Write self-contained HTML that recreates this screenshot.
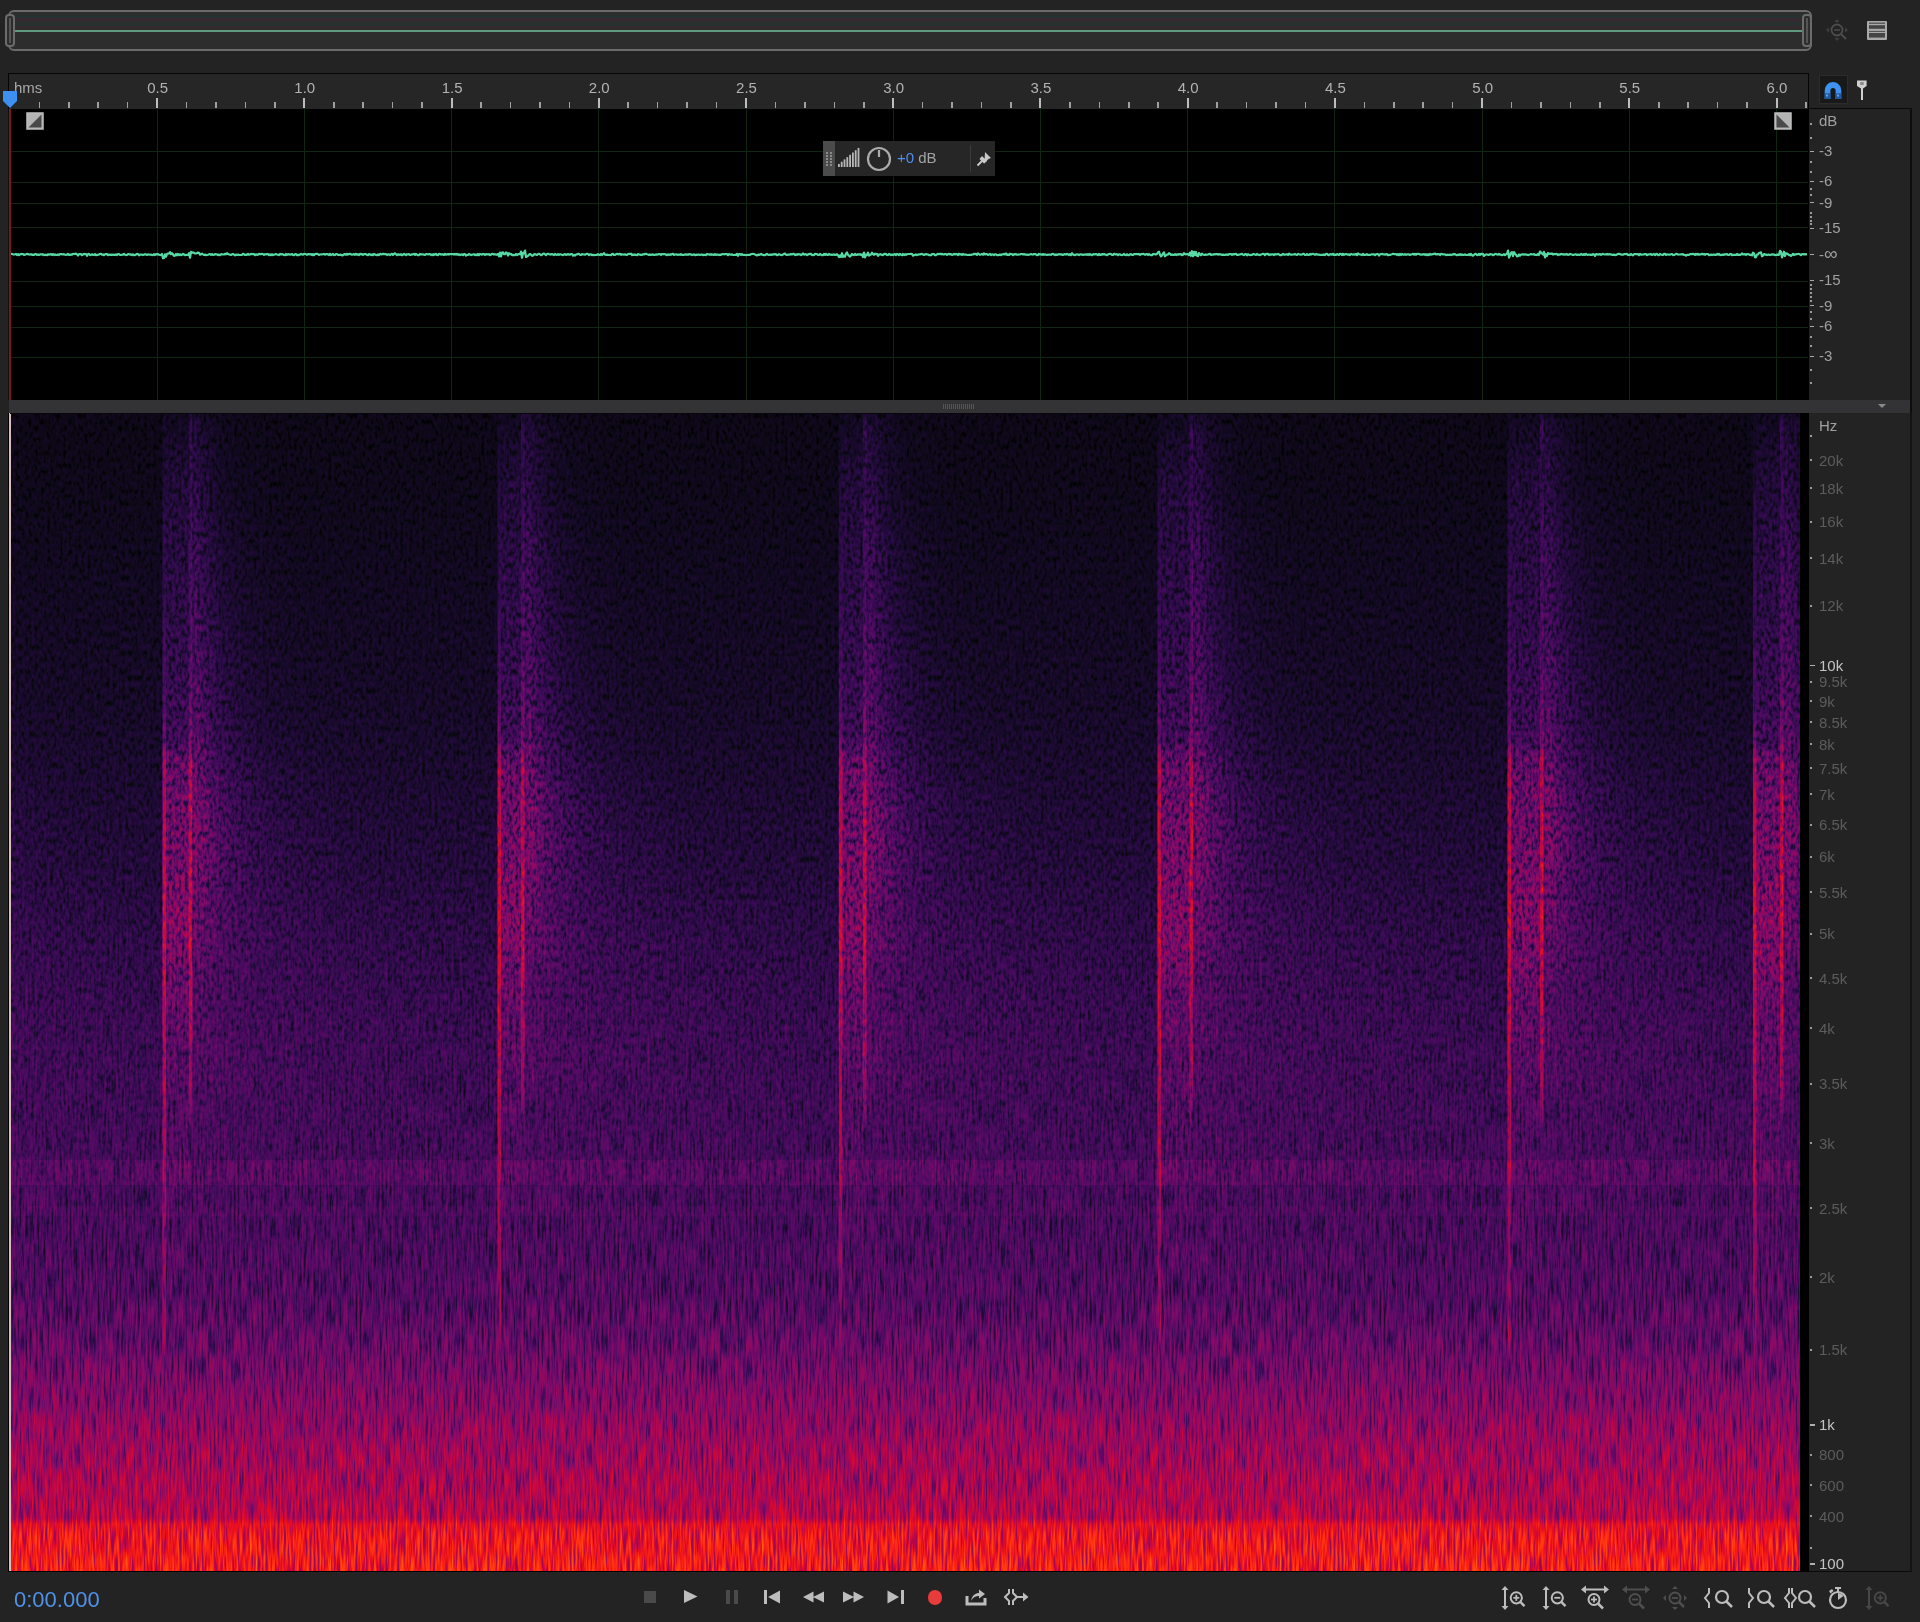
<!DOCTYPE html><html><head><meta charset="utf-8"><style>
*{margin:0;padding:0;box-sizing:border-box}
html,body{width:1920px;height:1622px;overflow:hidden;background:#232323;font-family:"Liberation Sans",sans-serif;-webkit-font-smoothing:antialiased}
.txt{will-change:transform}
.a{position:absolute}
.lbl{position:absolute;color:#b2b2b2;font-size:15px;line-height:15px;white-space:nowrap}
.hz{position:absolute;color:#5c5c5c;font-size:15px;line-height:15px;white-space:nowrap;left:1819px}
.db{position:absolute;color:#a0a0a0;font-size:15px;line-height:15px;white-space:nowrap;left:1819px}
</style></head><body><div class="a" style="left:0;top:0;width:1920px;height:1622px;will-change:transform"><div class="a" style="left:8px;top:10px;width:1804px;height:41px;border:2px solid #6b6b6b;border-radius:6px;background:#2d2d2d;overflow:hidden"><div class="a" style="left:0;top:3px;width:100%;height:3px;background:#263131"></div><div class="a" style="left:0;top:6px;width:100%;height:3px;background:#362a30"></div><div class="a" style="left:0;top:10px;width:100%;height:4px;background:#283030"></div><div class="a" style="left:0;top:14px;width:100%;height:3px;background:#352a2b"></div><div class="a" style="left:0;top:17.5px;width:100%;height:2px;background:#5f9a80"></div></div><div class="a" style="left:5px;top:14px;width:10px;height:33px;border:2px solid #6b6b6b;border-radius:4px;background:#2d2d2d"><div class="a" style="left:2px;top:2px;width:2px;height:25px;background:#555"></div></div><div class="a" style="left:1802px;top:14px;width:10px;height:33px;border:2px solid #6b6b6b;border-radius:4px;background:#2d2d2d"><div class="a" style="left:2px;top:2px;width:2px;height:25px;background:#555"></div></div><svg class="a" style="left:1824px;top:17px" width="28" height="28" viewBox="0 0 28 28"><circle cx="13" cy="13" r="5.5" fill="none" stroke="#4c4c4c" stroke-width="1.8"/><line x1="10" y1="13" x2="16" y2="13" stroke="#4c4c4c" stroke-width="1.5"/><line x1="17" y1="17" x2="22" y2="22" stroke="#4c4c4c" stroke-width="2"/><path d="M13 2 L15.5 5 L10.5 5 Z M13 24 L15.5 21 L10.5 21 Z M2 13 L5 10.5 L5 15.5 Z M24 13 L21 10.5 L21 15.5 Z" fill="#404040"/></svg><svg class="a" style="left:1866px;top:20px" width="22" height="21" viewBox="0 0 22 21"><rect x="1" y="1" width="20" height="19" rx="1" fill="#a9a9a9"/><rect x="3" y="2.6" width="16" height="1.2" fill="#4a4a4a"/><rect x="3" y="5.2" width="16" height="3.6" fill="#444"/><rect x="3" y="10.9" width="16" height="1.1" fill="#555"/><rect x="3" y="13" width="16" height="4.6" fill="#444"/></svg><div class="a" style="left:8px;top:73px;width:1801px;height:37px;background:#262626;border:1px solid #050505;border-bottom:1px solid #000"></div><div class="a" style="left:38.5px;top:102px;width:1.6px;height:6px;background:#a0a0a0"></div><div class="a" style="left:68.0px;top:102px;width:1.6px;height:6px;background:#a0a0a0"></div><div class="a" style="left:97.4px;top:102px;width:1.6px;height:6px;background:#a0a0a0"></div><div class="a" style="left:126.9px;top:102px;width:1.6px;height:6px;background:#a0a0a0"></div><div class="a" style="left:156.1px;top:98px;width:2px;height:10px;background:#bdbdbd"></div><div class="a" style="left:185.8px;top:102px;width:1.6px;height:6px;background:#a0a0a0"></div><div class="a" style="left:215.2px;top:102px;width:1.6px;height:6px;background:#a0a0a0"></div><div class="a" style="left:244.7px;top:102px;width:1.6px;height:6px;background:#a0a0a0"></div><div class="a" style="left:274.1px;top:102px;width:1.6px;height:6px;background:#a0a0a0"></div><div class="a" style="left:303.3px;top:98px;width:2px;height:10px;background:#bdbdbd"></div><div class="a" style="left:333.0px;top:102px;width:1.6px;height:6px;background:#a0a0a0"></div><div class="a" style="left:362.4px;top:102px;width:1.6px;height:6px;background:#a0a0a0"></div><div class="a" style="left:391.9px;top:102px;width:1.6px;height:6px;background:#a0a0a0"></div><div class="a" style="left:421.3px;top:102px;width:1.6px;height:6px;background:#a0a0a0"></div><div class="a" style="left:450.6px;top:98px;width:2px;height:10px;background:#bdbdbd"></div><div class="a" style="left:480.2px;top:102px;width:1.6px;height:6px;background:#a0a0a0"></div><div class="a" style="left:509.6px;top:102px;width:1.6px;height:6px;background:#a0a0a0"></div><div class="a" style="left:539.1px;top:102px;width:1.6px;height:6px;background:#a0a0a0"></div><div class="a" style="left:568.5px;top:102px;width:1.6px;height:6px;background:#a0a0a0"></div><div class="a" style="left:597.8px;top:98px;width:2px;height:10px;background:#bdbdbd"></div><div class="a" style="left:627.4px;top:102px;width:1.6px;height:6px;background:#a0a0a0"></div><div class="a" style="left:656.9px;top:102px;width:1.6px;height:6px;background:#a0a0a0"></div><div class="a" style="left:686.3px;top:102px;width:1.6px;height:6px;background:#a0a0a0"></div><div class="a" style="left:715.8px;top:102px;width:1.6px;height:6px;background:#a0a0a0"></div><div class="a" style="left:745.0px;top:98px;width:2px;height:10px;background:#bdbdbd"></div><div class="a" style="left:774.6px;top:102px;width:1.6px;height:6px;background:#a0a0a0"></div><div class="a" style="left:804.1px;top:102px;width:1.6px;height:6px;background:#a0a0a0"></div><div class="a" style="left:833.5px;top:102px;width:1.6px;height:6px;background:#a0a0a0"></div><div class="a" style="left:863.0px;top:102px;width:1.6px;height:6px;background:#a0a0a0"></div><div class="a" style="left:892.2px;top:98px;width:2px;height:10px;background:#bdbdbd"></div><div class="a" style="left:921.9px;top:102px;width:1.6px;height:6px;background:#a0a0a0"></div><div class="a" style="left:951.3px;top:102px;width:1.6px;height:6px;background:#a0a0a0"></div><div class="a" style="left:980.8px;top:102px;width:1.6px;height:6px;background:#a0a0a0"></div><div class="a" style="left:1010.2px;top:102px;width:1.6px;height:6px;background:#a0a0a0"></div><div class="a" style="left:1039.4px;top:98px;width:2px;height:10px;background:#bdbdbd"></div><div class="a" style="left:1069.1px;top:102px;width:1.6px;height:6px;background:#a0a0a0"></div><div class="a" style="left:1098.5px;top:102px;width:1.6px;height:6px;background:#a0a0a0"></div><div class="a" style="left:1128.0px;top:102px;width:1.6px;height:6px;background:#a0a0a0"></div><div class="a" style="left:1157.4px;top:102px;width:1.6px;height:6px;background:#a0a0a0"></div><div class="a" style="left:1186.7px;top:98px;width:2px;height:10px;background:#bdbdbd"></div><div class="a" style="left:1216.3px;top:102px;width:1.6px;height:6px;background:#a0a0a0"></div><div class="a" style="left:1245.7px;top:102px;width:1.6px;height:6px;background:#a0a0a0"></div><div class="a" style="left:1275.2px;top:102px;width:1.6px;height:6px;background:#a0a0a0"></div><div class="a" style="left:1304.6px;top:102px;width:1.6px;height:6px;background:#a0a0a0"></div><div class="a" style="left:1333.9px;top:98px;width:2px;height:10px;background:#bdbdbd"></div><div class="a" style="left:1363.5px;top:102px;width:1.6px;height:6px;background:#a0a0a0"></div><div class="a" style="left:1393.0px;top:102px;width:1.6px;height:6px;background:#a0a0a0"></div><div class="a" style="left:1422.4px;top:102px;width:1.6px;height:6px;background:#a0a0a0"></div><div class="a" style="left:1451.9px;top:102px;width:1.6px;height:6px;background:#a0a0a0"></div><div class="a" style="left:1481.1px;top:98px;width:2px;height:10px;background:#bdbdbd"></div><div class="a" style="left:1510.7px;top:102px;width:1.6px;height:6px;background:#a0a0a0"></div><div class="a" style="left:1540.2px;top:102px;width:1.6px;height:6px;background:#a0a0a0"></div><div class="a" style="left:1569.6px;top:102px;width:1.6px;height:6px;background:#a0a0a0"></div><div class="a" style="left:1599.1px;top:102px;width:1.6px;height:6px;background:#a0a0a0"></div><div class="a" style="left:1628.3px;top:98px;width:2px;height:10px;background:#bdbdbd"></div><div class="a" style="left:1658.0px;top:102px;width:1.6px;height:6px;background:#a0a0a0"></div><div class="a" style="left:1687.4px;top:102px;width:1.6px;height:6px;background:#a0a0a0"></div><div class="a" style="left:1716.9px;top:102px;width:1.6px;height:6px;background:#a0a0a0"></div><div class="a" style="left:1746.3px;top:102px;width:1.6px;height:6px;background:#a0a0a0"></div><div class="a" style="left:1775.5px;top:98px;width:2px;height:10px;background:#bdbdbd"></div><div class="a" style="left:1805.2px;top:102px;width:1.6px;height:6px;background:#a0a0a0"></div><div class="lbl" style="left:137.6px;top:80px;width:40px;text-align:center">0.5</div><div class="lbl" style="left:284.8px;top:80px;width:40px;text-align:center">1.0</div><div class="lbl" style="left:432.1px;top:80px;width:40px;text-align:center">1.5</div><div class="lbl" style="left:579.3px;top:80px;width:40px;text-align:center">2.0</div><div class="lbl" style="left:726.5px;top:80px;width:40px;text-align:center">2.5</div><div class="lbl" style="left:873.7px;top:80px;width:40px;text-align:center">3.0</div><div class="lbl" style="left:1020.9px;top:80px;width:40px;text-align:center">3.5</div><div class="lbl" style="left:1168.2px;top:80px;width:40px;text-align:center">4.0</div><div class="lbl" style="left:1315.4px;top:80px;width:40px;text-align:center">4.5</div><div class="lbl" style="left:1462.6px;top:80px;width:40px;text-align:center">5.0</div><div class="lbl" style="left:1609.8px;top:80px;width:40px;text-align:center">5.5</div><div class="lbl" style="left:1757.0px;top:80px;width:40px;text-align:center">6.0</div><div class="lbl" style="left:14px;top:80px;color:#a8a8a8">hms</div><svg class="a" style="left:2px;top:90px" width="16" height="19" viewBox="0 0 16 19"><path d="M1 1 H15 V11 L8 18 L1 11 Z" fill="#3d8ff0"/></svg><div class="a" style="left:1819px;top:75px;width:29px;height:29px;background:#191919;border:1px solid #2c2c2c"></div><svg class="a" style="left:1823px;top:80px" width="20" height="21" viewBox="0 0 20 21"><path d="M1.7 19 V10.3 A8.3 8.3 0 0 1 18.3 10.3 V19 H12.6 V10.5 A2.6 2.6 0 0 0 7.4 10.5 V19 Z" fill="#3d92f2"/><rect x="1.7" y="13.3" width="5.7" height="5.7" fill="#1f5aa0"/><rect x="12.6" y="13.3" width="5.7" height="5.7" fill="#1f5aa0"/><rect x="3" y="14.5" width="2" height="2" fill="#5aa6f5"/><rect x="14" y="14.5" width="2" height="2" fill="#5aa6f5"/></svg><svg class="a" style="left:1856px;top:79px" width="12" height="23" viewBox="0 0 12 23"><path d="M1 1.4 H10.6 V7 L7 9.6 V21 H5 V9.6 L1 7 Z" fill="#cfcfcf"/><rect x="4.2" y="3" width="3.5" height="3" fill="#8a8a8a"/></svg><div class="a" style="left:8px;top:109px;width:1801px;height:291px;background:#000;border-left:1px solid #111"></div><div class="a" style="left:11px;top:151px;width:1797px;height:1px;background:#112612"></div><div class="a" style="left:11px;top:182px;width:1797px;height:1px;background:#112612"></div><div class="a" style="left:11px;top:203px;width:1797px;height:1px;background:#112612"></div><div class="a" style="left:11px;top:227px;width:1797px;height:1px;background:#112612"></div><div class="a" style="left:11px;top:281px;width:1797px;height:1px;background:#112612"></div><div class="a" style="left:11px;top:306px;width:1797px;height:1px;background:#112612"></div><div class="a" style="left:11px;top:327px;width:1797px;height:1px;background:#112612"></div><div class="a" style="left:11px;top:357px;width:1797px;height:1px;background:#112612"></div><div class="a" style="left:157px;top:109px;width:1px;height:291px;background:#112612"></div><div class="a" style="left:304px;top:109px;width:1px;height:291px;background:#112612"></div><div class="a" style="left:451px;top:109px;width:1px;height:291px;background:#112612"></div><div class="a" style="left:598px;top:109px;width:1px;height:291px;background:#112612"></div><div class="a" style="left:746px;top:109px;width:1px;height:291px;background:#112612"></div><div class="a" style="left:893px;top:109px;width:1px;height:291px;background:#112612"></div><div class="a" style="left:1040px;top:109px;width:1px;height:291px;background:#112612"></div><div class="a" style="left:1187px;top:109px;width:1px;height:291px;background:#112612"></div><div class="a" style="left:1334px;top:109px;width:1px;height:291px;background:#112612"></div><div class="a" style="left:1482px;top:109px;width:1px;height:291px;background:#112612"></div><div class="a" style="left:1629px;top:109px;width:1px;height:291px;background:#112612"></div><div class="a" style="left:1776px;top:109px;width:1px;height:291px;background:#112612"></div><div class="a" style="left:9px;top:109px;width:2px;height:291px;background:#7a1822"></div><svg class="a" style="left:0;top:0" width="1810" height="400"><polyline points="11,254.0 12,253.9 13,254.3 14,254.5 15,254.3 16,253.9 17,255.0 18,254.1 19,255.1 20,254.4 21,253.9 22,254.2 23,254.0 24,254.9 25,254.6 26,254.3 27,253.9 28,254.1 29,254.4 30,254.6 31,254.2 32,254.8 33,254.6 34,255.0 35,254.2 36,254.0 37,254.9 38,254.5 39,255.0 40,254.6 41,254.2 42,254.6 43,254.4 44,255.1 45,254.7 46,254.8 47,255.2 48,254.2 49,254.7 50,254.4 51,254.0 52,254.9 53,254.1 54,255.0 55,254.4 56,255.0 57,255.0 58,254.4 59,255.0 60,254.0 61,254.1 62,254.5 63,254.2 64,254.3 65,254.6 66,254.8 67,254.7 68,253.9 69,254.9 70,254.9 71,254.4 72,254.7 73,253.9 74,254.0 75,253.9 76,253.5 77,254.3 78,255.5 79,254.0 80,254.3 81,254.0 82,255.2 83,254.5 84,253.9 85,254.2 86,254.0 87,255.8 88,254.0 89,253.8 90,255.2 91,254.8 92,254.3 93,254.9 94,254.9 95,254.1 96,255.2 97,254.9 98,254.8 99,254.5 100,253.8 101,253.9 102,254.8 103,254.4 104,255.2 105,254.3 106,254.1 107,254.1 108,255.1 109,254.5 110,254.9 111,254.7 112,254.9 113,254.5 114,254.9 115,254.9 116,254.4 117,255.1 118,254.0 119,254.0 120,254.9 121,255.0 122,254.7 123,254.6 124,253.8 125,254.7 126,255.1 127,255.0 128,254.1 129,254.2 130,254.6 131,254.4 132,255.1 133,254.4 134,255.1 135,255.1 136,254.5 137,253.8 138,254.1 139,255.3 140,254.5 141,254.6 142,254.5 143,254.9 144,254.6 145,254.2 146,254.5 147,254.9 148,254.4 149,254.5 150,254.8 151,254.5 152,255.1 153,255.0 154,254.2 155,255.1 156,254.0 157,254.4 158,254.1 159,254.7 160,255.1 161,254.8 162,254.0 163,258.2 164,257.9 165,254.4 166,256.7 167,254.1 168,253.6 169,253.5 170,252.2 171,254.2 172,253.2 173,254.5 174,255.9 175,255.7 176,254.0 177,255.3 178,254.0 179,255.1 180,254.2 181,255.1 182,254.8 183,253.9 184,254.4 185,255.1 186,254.9 187,255.0 188,255.0 189,253.2 190,257.7 191,251.9 192,252.8 193,252.4 194,252.8 195,253.5 196,253.5 197,253.1 198,252.6 199,252.8 200,254.7 201,254.4 202,253.7 203,254.4 204,255.0 205,254.5 206,255.2 207,255.0 208,254.7 209,254.3 210,254.0 211,254.8 212,254.0 213,255.0 214,254.7 215,254.1 216,254.4 217,254.4 218,255.1 219,254.6 220,255.2 221,254.3 222,254.2 223,254.5 224,254.5 225,253.8 226,254.4 227,253.2 228,254.1 229,254.5 230,254.7 231,255.0 232,254.3 233,254.0 234,254.7 235,255.4 236,254.7 237,254.9 238,254.5 239,255.0 240,255.0 241,255.0 242,254.8 243,253.8 244,254.3 245,255.0 246,254.7 247,254.8 248,253.8 249,254.8 250,254.5 251,253.9 252,254.2 253,254.2 254,254.1 255,255.2 256,254.3 257,254.8 258,254.7 259,253.9 260,254.2 261,254.2 262,253.8 263,254.2 264,254.8 265,254.2 266,254.5 267,254.0 268,254.1 269,255.1 270,254.4 271,255.2 272,254.2 273,255.1 274,254.6 275,254.5 276,254.0 277,254.5 278,254.8 279,255.1 280,253.8 281,254.5 282,254.2 283,254.3 284,255.0 285,255.2 286,254.0 287,254.8 288,254.2 289,254.4 290,254.6 291,254.4 292,253.9 293,255.0 294,255.1 295,254.2 296,254.1 297,255.1 298,254.9 299,255.1 300,254.6 301,253.9 302,254.4 303,254.7 304,253.9 305,254.0 306,254.3 307,254.8 308,254.2 309,254.2 310,254.4 311,254.0 312,255.1 313,254.1 314,255.2 315,254.0 316,253.9 317,253.9 318,254.2 319,255.0 320,254.4 321,254.5 322,254.3 323,254.2 324,254.0 325,254.7 326,254.1 327,254.1 328,254.4 329,255.0 330,253.8 331,255.1 332,254.5 333,253.8 334,255.1 335,255.0 336,254.1 337,254.0 338,254.8 339,254.8 340,254.9 341,254.6 342,255.3 343,255.1 344,254.2 345,254.2 346,254.8 347,253.9 348,254.6 349,254.1 350,253.8 351,254.4 352,254.7 353,254.5 354,254.1 355,254.8 356,253.8 357,254.7 358,254.2 359,255.1 360,253.8 361,254.4 362,254.1 363,254.8 364,254.1 365,254.2 366,254.1 367,254.9 368,255.1 369,254.1 370,254.4 371,255.1 372,254.4 373,255.2 374,253.9 375,254.4 376,255.0 377,255.2 378,254.3 379,255.1 380,253.8 381,254.3 382,254.3 383,253.8 384,254.3 385,254.0 386,254.1 387,255.0 388,254.4 389,254.4 390,255.1 391,254.3 392,253.8 393,254.9 394,253.9 395,253.3 396,254.2 397,255.1 398,254.2 399,254.7 400,254.8 401,254.2 402,255.2 403,254.7 404,253.8 405,254.5 406,255.1 407,254.2 408,254.5 409,254.1 410,254.8 411,254.9 412,254.3 413,254.3 414,253.9 415,254.9 416,253.9 417,254.6 418,255.2 419,255.2 420,253.9 421,254.5 422,254.4 423,254.4 424,254.7 425,255.0 426,254.0 427,254.2 428,254.3 429,254.1 430,254.1 431,255.0 432,254.3 433,255.2 434,254.1 435,254.7 436,253.9 437,254.9 438,255.1 439,253.9 440,254.1 441,254.6 442,254.3 443,254.4 444,254.9 445,253.9 446,254.7 447,254.3 448,254.1 449,254.6 450,254.1 451,254.0 452,254.1 453,254.1 454,254.6 455,253.9 456,254.6 457,253.9 458,254.8 459,254.2 460,255.1 461,254.6 462,254.4 463,255.2 464,254.1 465,254.1 466,255.6 467,254.9 468,255.0 469,254.0 470,254.6 471,255.1 472,254.7 473,254.5 474,254.2 475,255.1 476,254.5 477,255.2 478,254.0 479,255.2 480,253.9 481,254.3 482,254.7 483,254.0 484,254.1 485,255.0 486,254.1 487,254.4 488,254.3 489,254.1 490,255.1 491,254.7 492,253.9 493,254.0 494,254.6 495,254.2 496,254.6 497,254.7 498,254.0 499,256.3 500,252.6 501,256.4 502,252.5 503,252.3 504,254.1 505,254.2 506,252.5 507,252.9 508,255.5 509,253.2 510,254.2 511,253.8 512,255.2 513,254.9 514,255.2 515,255.1 516,254.0 517,255.1 518,254.3 519,254.0 520,254.2 521,251.6 522,257.7 523,252.8 524,253.3 525,250.6 526,257.0 527,256.6 528,255.9 529,254.6 530,254.0 531,254.7 532,255.6 533,255.7 534,254.3 535,254.2 536,254.6 537,254.9 538,254.0 539,253.9 540,254.2 541,255.2 542,254.7 543,253.8 544,253.5 545,254.4 546,255.1 547,254.1 548,253.8 549,254.1 550,254.3 551,254.6 552,254.1 553,254.5 554,255.1 555,254.0 556,254.7 557,254.9 558,254.2 559,254.9 560,254.3 561,254.4 562,254.8 563,255.1 564,254.6 565,254.1 566,254.9 567,254.6 568,254.0 569,254.7 570,254.7 571,254.0 572,254.2 573,255.6 574,254.8 575,255.5 576,254.5 577,254.4 578,253.9 579,253.9 580,254.8 581,255.0 582,254.2 583,254.4 584,254.5 585,254.7 586,254.1 587,253.8 588,254.1 589,255.1 590,254.3 591,254.3 592,255.1 593,254.8 594,255.2 595,255.0 596,255.0 597,254.8 598,254.2 599,254.7 600,255.1 601,253.8 602,255.1 603,254.0 604,253.2 605,254.7 606,254.8 607,254.6 608,254.9 609,255.0 610,255.0 611,255.1 612,254.1 613,253.8 614,254.9 615,255.0 616,254.2 617,253.9 618,254.1 619,254.4 620,253.8 621,254.8 622,254.2 623,254.5 624,254.7 625,254.3 626,254.9 627,254.8 628,254.1 629,253.9 630,254.0 631,253.7 632,255.2 633,254.5 634,254.9 635,254.5 636,255.0 637,255.1 638,254.1 639,254.5 640,254.7 641,254.9 642,254.9 643,254.3 644,254.4 645,253.9 646,253.8 647,254.2 648,254.5 649,255.0 650,254.4 651,254.9 652,254.7 653,254.3 654,255.0 655,254.8 656,254.4 657,254.6 658,254.4 659,254.1 660,254.2 661,255.0 662,254.0 663,254.3 664,254.0 665,254.1 666,254.8 667,255.1 668,254.3 669,254.9 670,254.4 671,254.7 672,254.1 673,253.8 674,254.9 675,254.5 676,254.4 677,254.6 678,254.8 679,254.4 680,254.8 681,254.1 682,255.0 683,254.8 684,254.8 685,254.4 686,254.7 687,254.4 688,254.8 689,254.2 690,254.4 691,254.4 692,255.1 693,254.7 694,254.3 695,255.2 696,254.6 697,254.9 698,254.5 699,254.6 700,254.8 701,254.7 702,254.5 703,255.1 704,254.8 705,254.9 706,255.2 707,253.9 708,254.4 709,254.3 710,254.8 711,254.2 712,254.8 713,254.5 714,254.9 715,254.1 716,254.9 717,254.7 718,254.6 719,255.1 720,254.7 721,254.9 722,254.2 723,254.0 724,254.3 725,254.2 726,254.2 727,254.1 728,255.1 729,254.1 730,254.5 731,254.7 732,254.3 733,255.0 734,255.0 735,254.9 736,255.0 737,253.8 738,255.8 739,254.2 740,254.0 741,254.9 742,254.0 743,254.9 744,255.0 745,254.9 746,255.1 747,255.0 748,254.8 749,254.8 750,255.0 751,254.2 752,254.0 753,253.9 754,254.0 755,254.5 756,255.0 757,255.5 758,254.6 759,255.0 760,254.4 761,253.9 762,254.7 763,254.8 764,255.1 765,255.2 766,254.5 767,253.8 768,254.7 769,255.0 770,254.5 771,254.9 772,254.4 773,254.6 774,254.2 775,254.4 776,254.2 777,255.2 778,254.9 779,254.2 780,254.6 781,254.9 782,255.1 783,254.6 784,253.9 785,253.6 786,254.7 787,254.9 788,254.7 789,254.7 790,254.6 791,254.1 792,254.4 793,253.9 794,253.9 795,255.1 796,254.3 797,254.9 798,254.2 799,254.4 800,254.4 801,255.1 802,254.6 803,253.4 804,254.6 805,254.4 806,254.2 807,255.1 808,254.5 809,253.9 810,254.1 811,253.8 812,255.0 813,255.2 814,255.0 815,253.8 816,254.1 817,254.1 818,254.9 819,255.0 820,253.9 821,254.8 822,255.1 823,255.2 824,253.8 825,254.9 826,253.9 827,254.8 828,255.0 829,253.9 830,254.6 831,254.7 832,254.9 833,254.7 834,254.4 835,254.9 836,254.9 837,254.2 838,255.2 839,257.1 840,255.3 841,256.8 842,253.2 843,256.9 844,255.6 845,256.6 846,253.5 847,252.4 848,254.8 849,255.8 850,256.5 851,255.4 852,254.0 853,254.9 854,255.1 855,253.9 856,254.9 857,254.9 858,254.1 859,254.7 860,254.1 861,254.9 862,254.4 863,257.0 864,252.5 865,257.3 866,254.6 867,255.1 868,252.7 869,255.6 870,254.8 871,254.6 872,252.7 873,254.1 874,254.9 875,253.6 876,254.2 877,253.8 878,255.9 879,254.5 880,254.2 881,254.4 882,254.9 883,255.1 884,253.9 885,254.1 886,253.9 887,255.0 888,255.1 889,253.9 890,254.4 891,255.1 892,254.6 893,255.1 894,254.4 895,254.0 896,255.2 897,253.9 898,254.3 899,255.1 900,253.9 901,254.8 902,255.2 903,254.0 904,255.1 905,254.2 906,254.9 907,254.3 908,254.0 909,254.0 910,254.0 911,253.8 912,254.1 913,255.7 914,255.1 915,255.0 916,254.4 917,255.1 918,254.7 919,254.3 920,254.5 921,254.0 922,253.9 923,254.6 924,255.0 925,254.4 926,254.2 927,254.3 928,254.5 929,255.1 930,255.2 931,255.1 932,254.1 933,254.2 934,254.1 935,255.2 936,255.1 937,254.2 938,253.9 939,254.2 940,253.8 941,254.3 942,253.8 943,254.5 944,254.4 945,254.1 946,254.0 947,254.9 948,254.1 949,253.9 950,254.5 951,254.1 952,254.8 953,254.6 954,253.9 955,254.4 956,253.9 957,254.3 958,255.0 959,253.8 960,254.5 961,254.2 962,255.0 963,254.0 964,254.6 965,254.6 966,254.5 967,254.8 968,255.0 969,254.8 970,254.9 971,255.0 972,254.5 973,254.5 974,253.8 975,254.1 976,253.9 977,254.9 978,253.4 979,254.1 980,254.8 981,254.5 982,253.9 983,254.8 984,253.4 985,254.5 986,254.0 987,254.0 988,255.0 989,254.6 990,254.0 991,255.1 992,254.4 993,254.5 994,255.1 995,254.3 996,254.3 997,255.2 998,255.1 999,255.0 1000,254.5 1001,255.1 1002,254.4 1003,254.3 1004,253.9 1005,254.5 1006,253.5 1007,254.9 1008,254.7 1009,255.0 1010,253.8 1011,254.2 1012,254.2 1013,255.1 1014,254.2 1015,254.4 1016,254.2 1017,254.7 1018,254.6 1019,254.5 1020,254.5 1021,254.0 1022,254.0 1023,254.4 1024,254.1 1025,254.6 1026,254.7 1027,254.7 1028,254.8 1029,254.6 1030,254.5 1031,254.1 1032,254.5 1033,254.6 1034,254.1 1035,254.1 1036,254.5 1037,255.2 1038,254.9 1039,253.9 1040,254.4 1041,254.3 1042,254.8 1043,254.1 1044,254.8 1045,254.3 1046,254.7 1047,255.0 1048,254.5 1049,254.8 1050,254.5 1051,254.8 1052,254.0 1053,253.8 1054,254.6 1055,255.1 1056,254.4 1057,255.0 1058,254.3 1059,254.4 1060,254.2 1061,254.6 1062,254.3 1063,255.0 1064,254.4 1065,254.2 1066,254.6 1067,253.9 1068,254.3 1069,255.0 1070,254.1 1071,255.1 1072,253.2 1073,254.5 1074,254.9 1075,255.2 1076,254.5 1077,254.3 1078,254.6 1079,255.1 1080,254.5 1081,254.3 1082,254.6 1083,255.0 1084,254.5 1085,254.7 1086,254.3 1087,254.9 1088,254.2 1089,255.0 1090,254.0 1091,254.8 1092,255.2 1093,254.4 1094,254.2 1095,254.5 1096,254.1 1097,254.6 1098,255.2 1099,253.9 1100,254.9 1101,254.8 1102,254.0 1103,254.6 1104,254.1 1105,254.6 1106,254.7 1107,255.2 1108,254.4 1109,254.0 1110,253.9 1111,254.0 1112,255.0 1113,254.9 1114,253.8 1115,254.3 1116,254.3 1117,254.2 1118,255.1 1119,254.3 1120,254.3 1121,255.0 1122,255.1 1123,254.7 1124,253.9 1125,255.0 1126,255.1 1127,254.2 1128,255.1 1129,255.1 1130,254.3 1131,254.1 1132,255.0 1133,254.9 1134,254.0 1135,254.1 1136,254.2 1137,254.0 1138,254.3 1139,253.9 1140,255.0 1141,254.1 1142,254.2 1143,253.8 1144,254.3 1145,254.8 1146,254.2 1147,254.0 1148,255.0 1149,254.0 1150,254.8 1151,255.1 1152,255.1 1153,254.1 1154,254.0 1155,254.2 1156,254.6 1157,254.1 1158,252.2 1159,251.7 1160,254.8 1161,256.3 1162,255.5 1163,253.4 1164,252.3 1165,256.2 1166,255.2 1167,254.7 1168,254.5 1169,253.2 1170,253.8 1171,254.9 1172,254.4 1173,254.9 1174,255.0 1175,254.2 1176,255.0 1177,254.3 1178,254.7 1179,254.1 1180,254.3 1181,254.1 1182,255.1 1183,254.8 1184,253.2 1185,254.1 1186,254.3 1187,254.0 1188,254.1 1189,255.1 1190,252.6 1191,255.8 1192,251.2 1193,256.2 1194,251.9 1195,255.1 1196,252.0 1197,255.8 1198,256.1 1199,253.1 1200,254.2 1201,255.3 1202,253.7 1203,254.4 1204,254.8 1205,255.0 1206,254.4 1207,254.8 1208,254.5 1209,254.0 1210,253.9 1211,254.9 1212,254.6 1213,254.7 1214,254.1 1215,254.3 1216,254.1 1217,254.0 1218,254.7 1219,254.1 1220,254.4 1221,254.3 1222,255.0 1223,254.6 1224,254.9 1225,254.9 1226,254.7 1227,254.4 1228,255.0 1229,254.2 1230,254.1 1231,254.2 1232,254.8 1233,254.0 1234,254.5 1235,254.0 1236,253.8 1237,254.9 1238,254.8 1239,254.6 1240,254.5 1241,254.1 1242,253.8 1243,254.7 1244,255.1 1245,254.2 1246,254.0 1247,255.3 1248,254.2 1249,254.7 1250,255.1 1251,254.9 1252,254.8 1253,254.1 1254,254.2 1255,254.6 1256,255.0 1257,253.9 1258,254.7 1259,254.8 1260,255.1 1261,254.5 1262,254.2 1263,253.9 1264,254.0 1265,255.2 1266,253.9 1267,254.1 1268,253.8 1269,255.0 1270,254.4 1271,254.7 1272,254.4 1273,254.4 1274,255.0 1275,254.0 1276,254.4 1277,254.3 1278,253.9 1279,254.4 1280,255.1 1281,255.2 1282,254.7 1283,253.9 1284,254.7 1285,254.6 1286,254.5 1287,254.2 1288,255.0 1289,253.6 1290,254.4 1291,254.7 1292,254.6 1293,254.5 1294,254.4 1295,254.1 1296,254.6 1297,255.0 1298,253.9 1299,254.2 1300,254.6 1301,254.6 1302,254.5 1303,253.9 1304,253.9 1305,255.0 1306,254.8 1307,254.0 1308,254.8 1309,255.0 1310,254.0 1311,254.6 1312,254.0 1313,253.9 1314,254.3 1315,254.8 1316,254.2 1317,254.4 1318,254.7 1319,254.6 1320,255.0 1321,254.8 1322,254.9 1323,255.0 1324,254.3 1325,255.1 1326,253.9 1327,253.9 1328,254.9 1329,255.1 1330,254.2 1331,254.4 1332,254.6 1333,253.8 1334,254.9 1335,254.6 1336,254.8 1337,254.0 1338,254.6 1339,254.9 1340,253.8 1341,254.0 1342,255.0 1343,253.8 1344,254.9 1345,254.3 1346,254.0 1347,254.4 1348,254.7 1349,254.3 1350,255.1 1351,253.9 1352,254.3 1353,254.6 1354,254.3 1355,254.7 1356,253.8 1357,255.2 1358,253.5 1359,254.2 1360,254.5 1361,254.6 1362,255.1 1363,253.8 1364,254.9 1365,254.9 1366,254.7 1367,254.2 1368,255.0 1369,254.8 1370,254.9 1371,254.5 1372,254.3 1373,254.4 1374,254.3 1375,255.2 1376,254.3 1377,254.1 1378,254.0 1379,255.5 1380,254.4 1381,254.2 1382,253.9 1383,254.2 1384,254.6 1385,254.3 1386,254.6 1387,254.1 1388,255.2 1389,254.9 1390,255.0 1391,254.5 1392,254.2 1393,253.8 1394,254.2 1395,254.1 1396,254.1 1397,255.0 1398,254.1 1399,255.1 1400,253.9 1401,255.0 1402,254.0 1403,254.6 1404,254.7 1405,254.1 1406,254.8 1407,254.4 1408,254.3 1409,254.4 1410,254.9 1411,254.5 1412,254.2 1413,253.8 1414,254.6 1415,253.9 1416,254.8 1417,253.9 1418,254.0 1419,253.9 1420,254.4 1421,254.6 1422,254.7 1423,254.3 1424,254.2 1425,254.9 1426,254.2 1427,255.2 1428,254.2 1429,255.1 1430,253.8 1431,254.7 1432,254.3 1433,254.1 1434,253.9 1435,253.5 1436,254.5 1437,254.1 1438,254.3 1439,254.0 1440,255.1 1441,253.8 1442,254.1 1443,254.5 1444,254.3 1445,254.4 1446,255.1 1447,254.8 1448,254.7 1449,255.0 1450,254.6 1451,255.1 1452,254.7 1453,254.2 1454,254.4 1455,254.1 1456,254.7 1457,255.2 1458,254.6 1459,255.0 1460,254.2 1461,255.0 1462,254.3 1463,255.0 1464,254.8 1465,254.4 1466,255.0 1467,255.0 1468,254.9 1469,254.1 1470,255.2 1471,253.8 1472,255.2 1473,255.7 1474,254.8 1475,254.0 1476,253.9 1477,255.1 1478,255.0 1479,253.8 1480,254.9 1481,253.9 1482,254.1 1483,253.9 1484,255.9 1485,255.0 1486,254.5 1487,254.4 1488,254.8 1489,254.8 1490,254.0 1491,254.5 1492,254.3 1493,255.2 1494,254.8 1495,254.0 1496,253.9 1497,254.5 1498,254.6 1499,253.8 1500,254.7 1501,254.6 1502,255.2 1503,254.8 1504,254.2 1505,255.2 1506,254.3 1507,254.0 1508,250.5 1509,257.7 1510,255.3 1511,252.8 1512,252.1 1513,256.1 1514,252.1 1515,253.7 1516,254.7 1517,256.3 1518,256.2 1519,254.5 1520,255.7 1521,254.8 1522,254.3 1523,254.4 1524,254.7 1525,254.3 1526,254.6 1527,254.7 1528,255.1 1529,254.8 1530,254.5 1531,254.0 1532,254.5 1533,254.5 1534,254.1 1535,255.0 1536,254.7 1537,255.1 1538,253.9 1539,255.0 1540,251.5 1541,252.6 1542,253.5 1543,254.6 1544,252.0 1545,257.3 1546,254.2 1547,255.9 1548,253.0 1549,254.0 1550,253.6 1551,254.0 1552,253.3 1553,254.6 1554,254.0 1555,254.2 1556,254.1 1557,253.9 1558,255.0 1559,254.4 1560,254.7 1561,253.9 1562,254.3 1563,254.2 1564,254.7 1565,254.3 1566,254.6 1567,254.1 1568,254.8 1569,254.7 1570,253.9 1571,254.3 1572,254.5 1573,254.9 1574,254.8 1575,254.4 1576,254.4 1577,255.0 1578,254.5 1579,255.0 1580,254.8 1581,253.9 1582,254.6 1583,254.9 1584,254.1 1585,254.9 1586,253.9 1587,254.6 1588,254.8 1589,254.5 1590,254.8 1591,254.6 1592,254.9 1593,254.0 1594,254.5 1595,255.9 1596,254.2 1597,254.2 1598,254.6 1599,254.4 1600,254.2 1601,254.9 1602,254.2 1603,253.9 1604,254.3 1605,254.5 1606,254.3 1607,254.1 1608,254.6 1609,254.2 1610,254.4 1611,254.3 1612,254.9 1613,254.8 1614,254.6 1615,255.1 1616,255.0 1617,254.4 1618,253.9 1619,253.9 1620,254.1 1621,254.6 1622,254.5 1623,254.7 1624,254.1 1625,254.0 1626,254.1 1627,253.9 1628,255.1 1629,254.7 1630,255.1 1631,254.0 1632,254.8 1633,255.4 1634,254.1 1635,254.2 1636,254.0 1637,254.3 1638,254.0 1639,255.2 1640,253.8 1641,254.7 1642,254.6 1643,254.5 1644,254.4 1645,254.0 1646,254.0 1647,255.2 1648,254.5 1649,254.3 1650,254.5 1651,253.9 1652,255.0 1653,254.6 1654,254.0 1655,255.1 1656,254.1 1657,253.8 1658,255.2 1659,255.1 1660,253.9 1661,254.4 1662,254.8 1663,254.9 1664,253.9 1665,253.9 1666,254.9 1667,254.4 1668,254.5 1669,254.7 1670,254.6 1671,254.3 1672,254.0 1673,255.1 1674,255.0 1675,254.5 1676,253.9 1677,254.0 1678,254.6 1679,254.5 1680,254.5 1681,254.3 1682,254.4 1683,254.0 1684,255.0 1685,255.0 1686,255.7 1687,254.9 1688,254.8 1689,254.9 1690,254.2 1691,254.2 1692,254.2 1693,253.9 1694,254.1 1695,254.9 1696,253.9 1697,254.6 1698,253.9 1699,254.8 1700,254.3 1701,254.4 1702,253.8 1703,254.4 1704,253.9 1705,254.8 1706,254.0 1707,254.0 1708,254.1 1709,255.2 1710,254.9 1711,254.5 1712,255.1 1713,254.7 1714,254.7 1715,254.9 1716,254.8 1717,254.0 1718,254.7 1719,254.0 1720,255.1 1721,254.8 1722,254.9 1723,254.4 1724,254.9 1725,254.2 1726,254.5 1727,254.0 1728,254.9 1729,255.0 1730,254.1 1731,254.1 1732,255.1 1733,254.8 1734,254.9 1735,254.8 1736,255.0 1737,253.9 1738,255.0 1739,254.6 1740,254.9 1741,254.5 1742,253.4 1743,254.4 1744,254.4 1745,254.1 1746,255.0 1747,254.2 1748,254.2 1749,254.4 1750,254.9 1751,254.8 1752,255.4 1753,252.7 1754,253.5 1755,257.3 1756,257.1 1757,254.5 1758,254.5 1759,252.9 1760,252.9 1761,252.3 1762,256.2 1763,255.6 1764,254.1 1765,254.6 1766,254.5 1767,255.1 1768,254.7 1769,254.7 1770,255.1 1771,254.7 1772,254.3 1773,254.7 1774,254.5 1775,255.2 1776,255.0 1777,254.6 1778,254.9 1779,254.8 1780,250.8 1781,251.8 1782,257.3 1783,255.1 1784,251.7 1785,255.9 1786,253.3 1787,253.5 1788,254.2 1789,255.1 1790,255.1 1791,255.9 1792,255.0 1793,253.8 1794,255.0 1795,254.3 1796,254.5 1797,254.0 1798,254.0 1799,253.9 1800,254.3 1801,255.1 1802,254.2 1803,254.1 1804,254.4 1805,254.2 1806,254.3 1807,254.2" fill="none" stroke="#57d8a4" stroke-width="2.2" stroke-linejoin="round"/></svg><svg class="a" style="left:26px;top:112px" width="18" height="18" viewBox="0 0 18 18"><rect x="1" y="1" width="16" height="16" fill="#b4b4b4"/><path d="M2.5 15.5 L15.5 2.5 V15.5 Z" fill="#4a4a4a"/><rect x="1" y="1" width="16" height="16" fill="none" stroke="#bdbdbd" stroke-width="1.5"/></svg><svg class="a" style="left:1774px;top:112px" width="18" height="18" viewBox="0 0 18 18"><rect x="1" y="1" width="16" height="16" fill="#b4b4b4"/><path d="M2.5 2.5 L15.5 15.5 H2.5 Z" fill="#4a4a4a"/><rect x="1" y="1" width="16" height="16" fill="none" stroke="#bdbdbd" stroke-width="1.5"/></svg><div class="a" style="left:823px;top:141px;width:172px;height:35px;background:#262626;box-shadow:0 0 2px #000"></div><div class="a" style="left:823px;top:141px;width:12px;height:35px;background:#4b4b4b"></div><div class="a" style="left:826px;top:152px;width:2px;height:2px;background:#8a8a8a"></div><div class="a" style="left:826px;top:155px;width:2px;height:2px;background:#8a8a8a"></div><div class="a" style="left:826px;top:158px;width:2px;height:2px;background:#8a8a8a"></div><div class="a" style="left:826px;top:161px;width:2px;height:2px;background:#8a8a8a"></div><div class="a" style="left:826px;top:164px;width:2px;height:2px;background:#8a8a8a"></div><div class="a" style="left:830px;top:152px;width:2px;height:2px;background:#8a8a8a"></div><div class="a" style="left:830px;top:155px;width:2px;height:2px;background:#8a8a8a"></div><div class="a" style="left:830px;top:158px;width:2px;height:2px;background:#8a8a8a"></div><div class="a" style="left:830px;top:161px;width:2px;height:2px;background:#8a8a8a"></div><div class="a" style="left:830px;top:164px;width:2px;height:2px;background:#8a8a8a"></div><svg class="a" style="left:837px;top:147px" width="24" height="22" viewBox="0 0 24 22"><rect x="1.0" y="17.0" width="1.8" height="3.0" fill="#b8b8b8"/><rect x="3.8" y="14.7" width="1.8" height="5.3" fill="#b8b8b8"/><rect x="6.6" y="12.4" width="1.8" height="7.6" fill="#b8b8b8"/><rect x="9.4" y="10.1" width="1.8" height="9.9" fill="#b8b8b8"/><rect x="12.2" y="7.8" width="1.8" height="12.2" fill="#b8b8b8"/><rect x="15.0" y="5.5" width="1.8" height="14.5" fill="#b8b8b8"/><rect x="17.8" y="3.2" width="1.8" height="16.8" fill="#b8b8b8"/><rect x="20.6" y="0.9" width="1.8" height="19.1" fill="#b8b8b8"/></svg><svg class="a" style="left:866px;top:146px" width="26" height="26" viewBox="0 0 26 26"><circle cx="13" cy="13" r="11" fill="none" stroke="#ababab" stroke-width="2.2"/><line x1="13" y1="4" x2="13" y2="11" stroke="#ababab" stroke-width="2.2"/></svg><div class="a" style="left:897px;top:150px;font-size:15px;line-height:15px;color:#4d8ff0">+0 <span style="color:#a3a3a3">dB</span></div><div class="a" style="left:970px;top:145px;width:1px;height:27px;background:#3c3c3c"></div><svg class="a" style="left:976px;top:151px" width="16" height="16" viewBox="0 0 16 16"><path d="M9 1 L15 7 L12.5 8 L8 12.5 L8.5 9.5 Z" fill="#c8c8c8"/><path d="M7.5 8.5 L1.5 14.5" stroke="#c8c8c8" stroke-width="2"/><path d="M6 5 L11 10 L8 12.5 L3.5 8 Z" fill="#c8c8c8"/></svg><div class="a" style="left:1809px;top:108px;width:103px;height:292px;background:#232323;border-top:1px solid #0a0a0a;border-right:2px solid #141414"></div><div class="db" style="top:113px">dB</div><div class="db" style="top:143.2px">-3</div><div class="a" style="left:1810px;top:151px;width:4px;height:1px;background:#a8a8a8"></div><div class="db" style="top:173.3px">-6</div><div class="a" style="left:1810px;top:181px;width:4px;height:1px;background:#a8a8a8"></div><div class="db" style="top:194.6px">-9</div><div class="a" style="left:1810px;top:202px;width:4px;height:1px;background:#a8a8a8"></div><div class="db" style="top:220.3px">-15</div><div class="a" style="left:1810px;top:228px;width:4px;height:1px;background:#a8a8a8"></div><div class="db" style="top:245.5px">-<span style="font-size:19px">∞</span></div><div class="a" style="left:1810px;top:254px;width:4px;height:1px;background:#a8a8a8"></div><div class="db" style="top:272.1px">-15</div><div class="a" style="left:1810px;top:280px;width:4px;height:1px;background:#a8a8a8"></div><div class="db" style="top:297.5px">-9</div><div class="a" style="left:1810px;top:305px;width:4px;height:1px;background:#a8a8a8"></div><div class="db" style="top:318.2px">-6</div><div class="a" style="left:1810px;top:326px;width:4px;height:1px;background:#a8a8a8"></div><div class="db" style="top:348.3px">-3</div><div class="a" style="left:1810px;top:356px;width:4px;height:1px;background:#a8a8a8"></div><div class="a" style="left:1810px;top:123px;width:2px;height:2px;background:#9a9a9a"></div><div class="a" style="left:1810px;top:137px;width:2px;height:2px;background:#9a9a9a"></div><div class="a" style="left:1810px;top:161px;width:2px;height:2px;background:#9a9a9a"></div><div class="a" style="left:1810px;top:171px;width:2px;height:2px;background:#9a9a9a"></div><div class="a" style="left:1810px;top:188px;width:2px;height:2px;background:#9a9a9a"></div><div class="a" style="left:1810px;top:194px;width:2px;height:2px;background:#9a9a9a"></div><div class="a" style="left:1810px;top:212px;width:2px;height:2px;background:#9a9a9a"></div><div class="a" style="left:1810px;top:216px;width:2px;height:2px;background:#9a9a9a"></div><div class="a" style="left:1810px;top:220px;width:2px;height:2px;background:#9a9a9a"></div><div class="a" style="left:1810px;top:223px;width:2px;height:2px;background:#9a9a9a"></div><div class="a" style="left:1810px;top:284px;width:2px;height:2px;background:#9a9a9a"></div><div class="a" style="left:1810px;top:288px;width:2px;height:2px;background:#9a9a9a"></div><div class="a" style="left:1810px;top:292px;width:2px;height:2px;background:#9a9a9a"></div><div class="a" style="left:1810px;top:296px;width:2px;height:2px;background:#9a9a9a"></div><div class="a" style="left:1810px;top:300px;width:2px;height:2px;background:#9a9a9a"></div><div class="a" style="left:1810px;top:311px;width:2px;height:2px;background:#9a9a9a"></div><div class="a" style="left:1810px;top:318px;width:2px;height:2px;background:#9a9a9a"></div><div class="a" style="left:1810px;top:336px;width:2px;height:2px;background:#9a9a9a"></div><div class="a" style="left:1810px;top:345px;width:2px;height:2px;background:#9a9a9a"></div><div class="a" style="left:1810px;top:369px;width:2px;height:2px;background:#9a9a9a"></div><div class="a" style="left:1810px;top:382px;width:2px;height:2px;background:#9a9a9a"></div><div class="a" style="left:9px;top:400px;width:1901px;height:13px;background:#333335"></div><div class="a" style="left:943px;top:404px;width:32px;height:5px;background:repeating-linear-gradient(90deg,#555 0 1px,transparent 1px 2px)"></div><svg class="a" style="left:1876px;top:402px" width="12" height="8"><path d="M2 2 H10 L6 6 Z" fill="#8a8a8a"/></svg><svg class="a" style="left:10px;top:413px" width="1790" height="1158" viewBox="0 0 1790 1158"><defs><linearGradient id="bg" x1="0" y1="0" x2="0" y2="1158" gradientUnits="userSpaceOnUse"><stop offset="0.0000" stop-color="rgb(22,46,0)"/><stop offset="0.1097" stop-color="rgb(29,53,13)"/><stop offset="0.1615" stop-color="rgb(33,56,18)"/><stop offset="0.2478" stop-color="rgb(38,66,28)"/><stop offset="0.3342" stop-color="rgb(47,76,38)"/><stop offset="0.3774" stop-color="rgb(51,83,53)"/><stop offset="0.5069" stop-color="rgb(65,102,98)"/><stop offset="0.5933" stop-color="rgb(71,106,128)"/><stop offset="0.6883" stop-color="rgb(78,111,177)"/><stop offset="0.7660" stop-color="rgb(88,115,217)"/><stop offset="0.7893" stop-color="rgb(98,115,221)"/><stop offset="0.8316" stop-color="rgb(115,115,227)"/><stop offset="0.8851" stop-color="rgb(135,115,236)"/><stop offset="0.8955" stop-color="rgb(138,115,238)"/><stop offset="0.9542" stop-color="rgb(153,115,248)"/><stop offset="0.9594" stop-color="rgb(178,115,248)"/><stop offset="0.9715" stop-color="rgb(184,115,250)"/><stop offset="1.0000" stop-color="rgb(189,115,255)"/></linearGradient><linearGradient id="l1" x1="0" y1="0" x2="0" y2="1158" gradientUnits="userSpaceOnUse"><stop offset="0.0000" stop-color="rgb(10,0,0)"/><stop offset="0.0751" stop-color="rgb(31,0,0)"/><stop offset="0.2047" stop-color="rgb(46,0,0)"/><stop offset="0.2824" stop-color="rgb(64,0,0)"/><stop offset="0.2997" stop-color="rgb(107,0,0)"/><stop offset="0.4465" stop-color="rgb(107,0,0)"/><stop offset="0.5069" stop-color="rgb(87,0,0)"/><stop offset="0.6364" stop-color="rgb(61,0,0)"/><stop offset="0.7953" stop-color="rgb(31,0,0)"/><stop offset="0.8178" stop-color="rgb(0,0,0)"/></linearGradient><linearGradient id="l2" x1="0" y1="0" x2="0" y2="1158" gradientUnits="userSpaceOnUse"><stop offset="0.0000" stop-color="rgb(15,4,0)"/><stop offset="0.0147" stop-color="rgb(41,10,0)"/><stop offset="0.0320" stop-color="rgb(26,6,0)"/><stop offset="0.2047" stop-color="rgb(33,8,0)"/><stop offset="0.2824" stop-color="rgb(46,11,0)"/><stop offset="0.2997" stop-color="rgb(76,19,0)"/><stop offset="0.4637" stop-color="rgb(76,19,0)"/><stop offset="0.5501" stop-color="rgb(56,14,0)"/><stop offset="0.6019" stop-color="rgb(31,8,0)"/><stop offset="0.6192" stop-color="rgb(0,0,0)"/></linearGradient><linearGradient id="mid" x1="0" y1="0" x2="0" y2="1158" gradientUnits="userSpaceOnUse"><stop offset="0.0000" stop-color="rgb(8,10,0)"/><stop offset="0.0579" stop-color="rgb(26,32,0)"/><stop offset="0.2047" stop-color="rgb(31,38,0)"/><stop offset="0.2824" stop-color="rgb(36,45,0)"/><stop offset="0.2997" stop-color="rgb(56,70,0)"/><stop offset="0.4465" stop-color="rgb(56,70,0)"/><stop offset="0.5069" stop-color="rgb(31,38,0)"/><stop offset="0.5933" stop-color="rgb(15,19,0)"/><stop offset="0.6796" stop-color="rgb(8,10,0)"/><stop offset="0.7660" stop-color="rgb(3,3,0)"/><stop offset="0.8092" stop-color="rgb(0,0,0)"/></linearGradient><linearGradient id="g0" x1="0" y1="0" x2="1" y2="0"><stop offset="0.000" stop-color="rgb(10,0,0)"/><stop offset="0.125" stop-color="rgb(6,0,0)"/><stop offset="0.250" stop-color="rgb(4,0,0)"/><stop offset="0.375" stop-color="rgb(2,0,0)"/><stop offset="0.500" stop-color="rgb(1,0,0)"/><stop offset="0.625" stop-color="rgb(1,0,0)"/><stop offset="0.750" stop-color="rgb(1,0,0)"/><stop offset="0.875" stop-color="rgb(0,0,0)"/><stop offset="1.000" stop-color="rgb(0,0,0)"/></linearGradient><linearGradient id="g1" x1="0" y1="0" x2="1" y2="0"><stop offset="0.000" stop-color="rgb(15,0,0)"/><stop offset="0.125" stop-color="rgb(9,0,0)"/><stop offset="0.250" stop-color="rgb(6,0,0)"/><stop offset="0.375" stop-color="rgb(3,0,0)"/><stop offset="0.500" stop-color="rgb(2,0,0)"/><stop offset="0.625" stop-color="rgb(1,0,0)"/><stop offset="0.750" stop-color="rgb(1,0,0)"/><stop offset="0.875" stop-color="rgb(0,0,0)"/><stop offset="1.000" stop-color="rgb(0,0,0)"/></linearGradient><linearGradient id="g2" x1="0" y1="0" x2="1" y2="0"><stop offset="0.000" stop-color="rgb(18,0,0)"/><stop offset="0.125" stop-color="rgb(11,0,0)"/><stop offset="0.250" stop-color="rgb(7,0,0)"/><stop offset="0.375" stop-color="rgb(4,0,0)"/><stop offset="0.500" stop-color="rgb(2,0,0)"/><stop offset="0.625" stop-color="rgb(1,0,0)"/><stop offset="0.750" stop-color="rgb(1,0,0)"/><stop offset="0.875" stop-color="rgb(1,0,0)"/><stop offset="1.000" stop-color="rgb(0,0,0)"/></linearGradient><linearGradient id="g3" x1="0" y1="0" x2="1" y2="0"><stop offset="0.000" stop-color="rgb(20,0,0)"/><stop offset="0.125" stop-color="rgb(12,0,0)"/><stop offset="0.250" stop-color="rgb(8,0,0)"/><stop offset="0.375" stop-color="rgb(5,0,0)"/><stop offset="0.500" stop-color="rgb(3,0,0)"/><stop offset="0.625" stop-color="rgb(2,0,0)"/><stop offset="0.750" stop-color="rgb(1,0,0)"/><stop offset="0.875" stop-color="rgb(1,0,0)"/><stop offset="1.000" stop-color="rgb(0,0,0)"/></linearGradient><linearGradient id="g4" x1="0" y1="0" x2="1" y2="0"><stop offset="0.000" stop-color="rgb(20,0,0)"/><stop offset="0.125" stop-color="rgb(12,0,0)"/><stop offset="0.250" stop-color="rgb(8,0,0)"/><stop offset="0.375" stop-color="rgb(5,0,0)"/><stop offset="0.500" stop-color="rgb(3,0,0)"/><stop offset="0.625" stop-color="rgb(2,0,0)"/><stop offset="0.750" stop-color="rgb(1,0,0)"/><stop offset="0.875" stop-color="rgb(1,0,0)"/><stop offset="1.000" stop-color="rgb(0,0,0)"/></linearGradient><linearGradient id="g5" x1="0" y1="0" x2="1" y2="0"><stop offset="0.000" stop-color="rgb(20,0,0)"/><stop offset="0.125" stop-color="rgb(12,0,0)"/><stop offset="0.250" stop-color="rgb(8,0,0)"/><stop offset="0.375" stop-color="rgb(5,0,0)"/><stop offset="0.500" stop-color="rgb(3,0,0)"/><stop offset="0.625" stop-color="rgb(2,0,0)"/><stop offset="0.750" stop-color="rgb(1,0,0)"/><stop offset="0.875" stop-color="rgb(1,0,0)"/><stop offset="1.000" stop-color="rgb(0,0,0)"/></linearGradient><linearGradient id="g6" x1="0" y1="0" x2="1" y2="0"><stop offset="0.000" stop-color="rgb(18,0,0)"/><stop offset="0.125" stop-color="rgb(11,0,0)"/><stop offset="0.250" stop-color="rgb(7,0,0)"/><stop offset="0.375" stop-color="rgb(4,0,0)"/><stop offset="0.500" stop-color="rgb(2,0,0)"/><stop offset="0.625" stop-color="rgb(1,0,0)"/><stop offset="0.750" stop-color="rgb(1,0,0)"/><stop offset="0.875" stop-color="rgb(1,0,0)"/><stop offset="1.000" stop-color="rgb(0,0,0)"/></linearGradient><linearGradient id="g7" x1="0" y1="0" x2="1" y2="0"><stop offset="0.000" stop-color="rgb(13,0,0)"/><stop offset="0.125" stop-color="rgb(8,0,0)"/><stop offset="0.250" stop-color="rgb(5,0,0)"/><stop offset="0.375" stop-color="rgb(3,0,0)"/><stop offset="0.500" stop-color="rgb(2,0,0)"/><stop offset="0.625" stop-color="rgb(1,0,0)"/><stop offset="0.750" stop-color="rgb(1,0,0)"/><stop offset="0.875" stop-color="rgb(0,0,0)"/><stop offset="1.000" stop-color="rgb(0,0,0)"/></linearGradient><linearGradient id="g8" x1="0" y1="0" x2="1" y2="0"><stop offset="0.000" stop-color="rgb(8,0,0)"/><stop offset="0.125" stop-color="rgb(5,0,0)"/><stop offset="0.250" stop-color="rgb(3,0,0)"/><stop offset="0.375" stop-color="rgb(2,0,0)"/><stop offset="0.500" stop-color="rgb(1,0,0)"/><stop offset="0.625" stop-color="rgb(1,0,0)"/><stop offset="0.750" stop-color="rgb(0,0,0)"/><stop offset="0.875" stop-color="rgb(0,0,0)"/><stop offset="1.000" stop-color="rgb(0,0,0)"/></linearGradient><linearGradient id="f0" x1="0" y1="0" x2="1" y2="0"><stop offset="0.000" stop-color="rgb(31,46,0)"/><stop offset="0.125" stop-color="rgb(19,28,0)"/><stop offset="0.250" stop-color="rgb(11,17,0)"/><stop offset="0.375" stop-color="rgb(7,10,0)"/><stop offset="0.500" stop-color="rgb(4,6,0)"/><stop offset="0.625" stop-color="rgb(3,4,0)"/><stop offset="0.750" stop-color="rgb(2,2,0)"/><stop offset="0.875" stop-color="rgb(1,1,0)"/><stop offset="1.000" stop-color="rgb(0,0,0)"/></linearGradient><linearGradient id="f1" x1="0" y1="0" x2="1" y2="0"><stop offset="0.000" stop-color="rgb(38,57,0)"/><stop offset="0.125" stop-color="rgb(23,35,0)"/><stop offset="0.250" stop-color="rgb(14,21,0)"/><stop offset="0.375" stop-color="rgb(9,13,0)"/><stop offset="0.500" stop-color="rgb(5,8,0)"/><stop offset="0.625" stop-color="rgb(3,5,0)"/><stop offset="0.750" stop-color="rgb(2,3,0)"/><stop offset="0.875" stop-color="rgb(1,2,0)"/><stop offset="1.000" stop-color="rgb(0,0,0)"/></linearGradient><linearGradient id="f2" x1="0" y1="0" x2="1" y2="0"><stop offset="0.000" stop-color="rgb(41,61,0)"/><stop offset="0.125" stop-color="rgb(25,37,0)"/><stop offset="0.250" stop-color="rgb(15,23,0)"/><stop offset="0.375" stop-color="rgb(9,14,0)"/><stop offset="0.500" stop-color="rgb(6,8,0)"/><stop offset="0.625" stop-color="rgb(3,5,0)"/><stop offset="0.750" stop-color="rgb(2,3,0)"/><stop offset="0.875" stop-color="rgb(1,2,0)"/><stop offset="1.000" stop-color="rgb(0,0,0)"/></linearGradient><linearGradient id="f3" x1="0" y1="0" x2="1" y2="0"><stop offset="0.000" stop-color="rgb(51,77,0)"/><stop offset="0.125" stop-color="rgb(31,46,0)"/><stop offset="0.250" stop-color="rgb(19,28,0)"/><stop offset="0.375" stop-color="rgb(11,17,0)"/><stop offset="0.500" stop-color="rgb(7,10,0)"/><stop offset="0.625" stop-color="rgb(4,6,0)"/><stop offset="0.750" stop-color="rgb(3,4,0)"/><stop offset="0.875" stop-color="rgb(2,2,0)"/><stop offset="1.000" stop-color="rgb(0,0,0)"/></linearGradient><linearGradient id="f4" x1="0" y1="0" x2="1" y2="0"><stop offset="0.000" stop-color="rgb(31,46,0)"/><stop offset="0.125" stop-color="rgb(19,28,0)"/><stop offset="0.250" stop-color="rgb(11,17,0)"/><stop offset="0.375" stop-color="rgb(7,10,0)"/><stop offset="0.500" stop-color="rgb(4,6,0)"/><stop offset="0.625" stop-color="rgb(3,4,0)"/><stop offset="0.750" stop-color="rgb(2,2,0)"/><stop offset="0.875" stop-color="rgb(1,1,0)"/><stop offset="1.000" stop-color="rgb(0,0,0)"/></linearGradient><linearGradient id="f5" x1="0" y1="0" x2="1" y2="0"><stop offset="0.000" stop-color="rgb(10,15,0)"/><stop offset="0.125" stop-color="rgb(6,9,0)"/><stop offset="0.250" stop-color="rgb(4,6,0)"/><stop offset="0.375" stop-color="rgb(2,3,0)"/><stop offset="0.500" stop-color="rgb(1,2,0)"/><stop offset="0.625" stop-color="rgb(1,1,0)"/><stop offset="0.750" stop-color="rgb(1,1,0)"/><stop offset="0.875" stop-color="rgb(0,0,0)"/><stop offset="1.000" stop-color="rgb(0,0,0)"/></linearGradient><filter id="cm" x="0" y="0" width="1790" height="1158" filterUnits="userSpaceOnUse" color-interpolation-filters="sRGB"><feColorMatrix in="SourceGraphic" type="matrix" values="1 0 0 0 0 1 0 0 0 0 1 0 0 0 0 0 0 0 0 1" result="I"/><feColorMatrix in="SourceGraphic" type="matrix" values="0 1 0 0 0 0 1 0 0 0 0 1 0 0 0 0 0 0 0 1" result="A"/><feColorMatrix in="SourceGraphic" type="matrix" values="0 0 1 0 0 0 0 1 0 0 0 0 1 0 0 0 0 0 0 1" result="W"/><feTurbulence type="fractalNoise" baseFrequency="0.5 0.035" numOctaves="2" seed="5" result="ns0"/><feColorMatrix in="ns0" type="matrix" values="1 0 0 0 0 1 0 0 0 0 1 0 0 0 0 0 0 0 0 1" result="ns"/><feTurbulence type="fractalNoise" baseFrequency="0.32 0.16" numOctaves="2" seed="11" result="nf0"/><feColorMatrix in="nf0" type="matrix" values="1 0 0 0 0 1 0 0 0 0 1 0 0 0 0 0 0 0 0 1" result="nf"/><feComposite in="ns" in2="W" operator="arithmetic" k1="1" k2="0" k3="0" k4="0" result="a"/><feColorMatrix in="SourceGraphic" type="matrix" values="0 0 -1 0 1 0 0 -1 0 1 0 0 -1 0 1 0 0 0 0 1" result="Wi"/><feComposite in="nf" in2="Wi" operator="arithmetic" k1="1" k2="0" k3="0" k4="0" result="b"/><feComposite in="a" in2="b" operator="arithmetic" k1="0" k2="1" k3="1" k4="0" result="n0"/><feComponentTransfer in="n0" result="n"><feFuncR type="table" tableValues="0 0.05 0.12 0.22 0.42 0.58 0.68 0.76 0.84 0.92 1"/><feFuncG type="table" tableValues="0 0.05 0.12 0.22 0.42 0.58 0.68 0.76 0.84 0.92 1"/><feFuncB type="table" tableValues="0 0.05 0.12 0.22 0.42 0.58 0.68 0.76 0.84 0.92 1"/></feComponentTransfer><feComposite in="n" in2="A" operator="arithmetic" k1="1" k2="0" k3="-0.55" k4="0.5" result="na"/><feComposite in="I" in2="na" operator="arithmetic" k1="0" k2="1" k3="1" k4="-0.5" result="s"/><feComponentTransfer in="s"><feFuncR type="table" tableValues="0.000 0.011 0.022 0.032 0.043 0.054 0.065 0.075 0.086 0.102 0.118 0.133 0.149 0.173 0.196 0.220 0.243 0.271 0.298 0.325 0.353 0.388 0.424 0.459 0.494 0.527 0.561 0.594 0.627 0.667 0.706 0.745 0.784 0.816 0.847 0.878 0.910 0.932 0.955 0.977 1.000 1.000 1.000 1.000 1.000 1.000 1.000 1.000 1.000 1.000 1.000"/><feFuncG type="table" tableValues="0.000 0.008 0.016 0.024 0.031 0.033 0.035 0.037 0.039 0.040 0.041 0.042 0.043 0.044 0.045 0.046 0.047 0.047 0.047 0.047 0.047 0.047 0.047 0.047 0.047 0.043 0.039 0.035 0.031 0.031 0.031 0.031 0.031 0.039 0.047 0.055 0.063 0.094 0.125 0.157 0.188 0.229 0.271 0.312 0.353 0.407 0.461 0.514 0.577 0.649 0.722"/><feFuncB type="table" tableValues="0.000 0.019 0.037 0.056 0.075 0.095 0.116 0.136 0.157 0.180 0.204 0.227 0.251 0.275 0.298 0.322 0.345 0.359 0.373 0.386 0.400 0.402 0.404 0.406 0.408 0.394 0.380 0.367 0.353 0.327 0.302 0.276 0.251 0.220 0.188 0.157 0.125 0.110 0.094 0.078 0.063 0.063 0.063 0.063 0.063 0.099 0.134 0.170 0.226 0.301 0.376"/></feComponentTransfer></filter><filter id="vb" x="-10%" y="-10%" width="120%" height="120%" color-interpolation-filters="sRGB"><feGaussianBlur stdDeviation="0 25"/></filter><filter id="vb2" x="-10%" y="-10%" width="120%" height="120%" color-interpolation-filters="sRGB"><feGaussianBlur stdDeviation="2 20"/></filter></defs><g filter="url(#cm)"><rect width="1790" height="1158" fill="url(#bg)"/><rect x="0" y="747" width="1790" height="25" fill="rgb(11,0,0)" style="mix-blend-mode:screen;mix-blend-mode:plus-lighter"/><rect x="0" y="793" width="1790" height="10" fill="rgb(5,0,0)" style="mix-blend-mode:screen;mix-blend-mode:plus-lighter"/><g style="mix-blend-mode:screen;mix-blend-mode:plus-lighter"><g filter="url(#vb)"><rect x="-114.0" y="0" width="100.0" height="87" fill="url(#g0)"/><rect x="-114.0" y="87" width="120.0" height="100" fill="url(#g1)"/><rect x="-114.0" y="187" width="160.0" height="100" fill="url(#g2)"/><rect x="-114.0" y="287" width="200.0" height="100" fill="url(#g3)"/><rect x="-114.0" y="387" width="340.0" height="100" fill="url(#g4)"/><rect x="-114.0" y="487" width="640.0" height="100" fill="url(#g5)"/><rect x="-114.0" y="587" width="1000.0" height="100" fill="url(#g6)"/><rect x="-114.0" y="687" width="1400.0" height="100" fill="url(#g7)"/><rect x="-114.0" y="787" width="1600.0" height="120" fill="url(#g8)"/><rect x="178.8" y="0" width="100.0" height="87" fill="url(#g0)"/><rect x="178.8" y="87" width="120.0" height="100" fill="url(#g1)"/><rect x="178.8" y="187" width="160.0" height="100" fill="url(#g2)"/><rect x="178.8" y="287" width="200.0" height="100" fill="url(#g3)"/><rect x="178.8" y="387" width="340.0" height="100" fill="url(#g4)"/><rect x="178.8" y="487" width="640.0" height="100" fill="url(#g5)"/><rect x="178.8" y="587" width="1000.0" height="100" fill="url(#g6)"/><rect x="178.8" y="687" width="1400.0" height="100" fill="url(#g7)"/><rect x="178.8" y="787" width="1600.0" height="120" fill="url(#g8)"/><rect x="511.0" y="0" width="100.0" height="87" fill="url(#g0)"/><rect x="511.0" y="87" width="120.0" height="100" fill="url(#g1)"/><rect x="511.0" y="187" width="160.0" height="100" fill="url(#g2)"/><rect x="511.0" y="287" width="200.0" height="100" fill="url(#g3)"/><rect x="511.0" y="387" width="340.0" height="100" fill="url(#g4)"/><rect x="511.0" y="487" width="640.0" height="100" fill="url(#g5)"/><rect x="511.0" y="587" width="1000.0" height="100" fill="url(#g6)"/><rect x="511.0" y="687" width="1400.0" height="100" fill="url(#g7)"/><rect x="511.0" y="787" width="1600.0" height="120" fill="url(#g8)"/><rect x="853.0" y="0" width="100.0" height="87" fill="url(#g0)"/><rect x="853.0" y="87" width="120.0" height="100" fill="url(#g1)"/><rect x="853.0" y="187" width="160.0" height="100" fill="url(#g2)"/><rect x="853.0" y="287" width="200.0" height="100" fill="url(#g3)"/><rect x="853.0" y="387" width="340.0" height="100" fill="url(#g4)"/><rect x="853.0" y="487" width="640.0" height="100" fill="url(#g5)"/><rect x="853.0" y="587" width="1000.0" height="100" fill="url(#g6)"/><rect x="853.0" y="687" width="1400.0" height="100" fill="url(#g7)"/><rect x="853.0" y="787" width="1600.0" height="120" fill="url(#g8)"/><rect x="1179.4" y="0" width="100.0" height="87" fill="url(#g0)"/><rect x="1179.4" y="87" width="120.0" height="100" fill="url(#g1)"/><rect x="1179.4" y="187" width="160.0" height="100" fill="url(#g2)"/><rect x="1179.4" y="287" width="200.0" height="100" fill="url(#g3)"/><rect x="1179.4" y="387" width="340.0" height="100" fill="url(#g4)"/><rect x="1179.4" y="487" width="640.0" height="100" fill="url(#g5)"/><rect x="1179.4" y="587" width="1000.0" height="100" fill="url(#g6)"/><rect x="1179.4" y="687" width="1400.0" height="100" fill="url(#g7)"/><rect x="1179.4" y="787" width="1600.0" height="120" fill="url(#g8)"/><rect x="1530.0" y="0" width="100.0" height="87" fill="url(#g0)"/><rect x="1530.0" y="87" width="120.0" height="100" fill="url(#g1)"/><rect x="1530.0" y="187" width="160.0" height="100" fill="url(#g2)"/><rect x="1530.0" y="287" width="200.0" height="100" fill="url(#g3)"/><rect x="1530.0" y="387" width="340.0" height="100" fill="url(#g4)"/><rect x="1530.0" y="487" width="640.0" height="100" fill="url(#g5)"/><rect x="1530.0" y="587" width="1000.0" height="100" fill="url(#g6)"/><rect x="1530.0" y="687" width="1400.0" height="100" fill="url(#g7)"/><rect x="1530.0" y="787" width="1600.0" height="120" fill="url(#g8)"/><rect x="1770.0" y="0" width="100.0" height="87" fill="url(#g0)"/><rect x="1770.0" y="87" width="120.0" height="100" fill="url(#g1)"/><rect x="1770.0" y="187" width="160.0" height="100" fill="url(#g2)"/><rect x="1770.0" y="287" width="200.0" height="100" fill="url(#g3)"/><rect x="1770.0" y="387" width="340.0" height="100" fill="url(#g4)"/><rect x="1770.0" y="487" width="640.0" height="100" fill="url(#g5)"/><rect x="1770.0" y="587" width="1000.0" height="100" fill="url(#g6)"/><rect x="1770.0" y="687" width="1400.0" height="100" fill="url(#g7)"/><rect x="1770.0" y="787" width="1600.0" height="120" fill="url(#g8)"/></g></g><g style="mix-blend-mode:screen;mix-blend-mode:plus-lighter"><g filter="url(#vb2)"><rect x="-110.5" y="0" width="88.0" height="107" fill="url(#f0)"/><rect x="-110.5" y="107" width="104.0" height="130" fill="url(#f1)"/><rect x="-110.5" y="237" width="120.0" height="110" fill="url(#f2)"/><rect x="-110.5" y="347" width="152.0" height="120" fill="url(#f3)"/><rect x="-110.5" y="467" width="160.0" height="80" fill="url(#f4)"/><rect x="-110.5" y="547" width="160.0" height="120" fill="url(#f5)"/><rect x="182.2" y="0" width="88.0" height="107" fill="url(#f0)"/><rect x="182.2" y="107" width="104.0" height="130" fill="url(#f1)"/><rect x="182.2" y="237" width="120.0" height="110" fill="url(#f2)"/><rect x="182.2" y="347" width="152.0" height="120" fill="url(#f3)"/><rect x="182.2" y="467" width="160.0" height="80" fill="url(#f4)"/><rect x="182.2" y="547" width="160.0" height="120" fill="url(#f5)"/><rect x="514.5" y="0" width="88.0" height="107" fill="url(#f0)"/><rect x="514.5" y="107" width="104.0" height="130" fill="url(#f1)"/><rect x="514.5" y="237" width="120.0" height="110" fill="url(#f2)"/><rect x="514.5" y="347" width="152.0" height="120" fill="url(#f3)"/><rect x="514.5" y="467" width="160.0" height="80" fill="url(#f4)"/><rect x="514.5" y="547" width="160.0" height="120" fill="url(#f5)"/><rect x="856.5" y="0" width="88.0" height="107" fill="url(#f0)"/><rect x="856.5" y="107" width="104.0" height="130" fill="url(#f1)"/><rect x="856.5" y="237" width="120.0" height="110" fill="url(#f2)"/><rect x="856.5" y="347" width="152.0" height="120" fill="url(#f3)"/><rect x="856.5" y="467" width="160.0" height="80" fill="url(#f4)"/><rect x="856.5" y="547" width="160.0" height="120" fill="url(#f5)"/><rect x="1182.9" y="0" width="88.0" height="107" fill="url(#f0)"/><rect x="1182.9" y="107" width="104.0" height="130" fill="url(#f1)"/><rect x="1182.9" y="237" width="120.0" height="110" fill="url(#f2)"/><rect x="1182.9" y="347" width="152.0" height="120" fill="url(#f3)"/><rect x="1182.9" y="467" width="160.0" height="80" fill="url(#f4)"/><rect x="1182.9" y="547" width="160.0" height="120" fill="url(#f5)"/><rect x="1533.5" y="0" width="88.0" height="107" fill="url(#f0)"/><rect x="1533.5" y="107" width="104.0" height="130" fill="url(#f1)"/><rect x="1533.5" y="237" width="120.0" height="110" fill="url(#f2)"/><rect x="1533.5" y="347" width="152.0" height="120" fill="url(#f3)"/><rect x="1533.5" y="467" width="160.0" height="80" fill="url(#f4)"/><rect x="1533.5" y="547" width="160.0" height="120" fill="url(#f5)"/><rect x="1773.5" y="0" width="88.0" height="107" fill="url(#f0)"/><rect x="1773.5" y="107" width="104.0" height="130" fill="url(#f1)"/><rect x="1773.5" y="237" width="120.0" height="110" fill="url(#f2)"/><rect x="1773.5" y="347" width="152.0" height="120" fill="url(#f3)"/><rect x="1773.5" y="467" width="160.0" height="80" fill="url(#f4)"/><rect x="1773.5" y="547" width="160.0" height="120" fill="url(#f5)"/></g></g><rect x="156.0" y="0" width="22.8" height="1158" fill="url(#mid)" style="mix-blend-mode:screen;mix-blend-mode:plus-lighter"/><rect x="152.5" y="0" width="3.5" height="1158" fill="url(#l1)" style="mix-blend-mode:screen;mix-blend-mode:plus-lighter"/><rect x="178.8" y="0" width="3.5" height="1158" fill="url(#l2)" style="mix-blend-mode:screen;mix-blend-mode:plus-lighter"/><rect x="491.0" y="0" width="20.0" height="1158" fill="url(#mid)" style="mix-blend-mode:screen;mix-blend-mode:plus-lighter"/><rect x="487.5" y="0" width="3.5" height="1158" fill="url(#l1)" style="mix-blend-mode:screen;mix-blend-mode:plus-lighter"/><rect x="511.0" y="0" width="3.5" height="1158" fill="url(#l2)" style="mix-blend-mode:screen;mix-blend-mode:plus-lighter"/><rect x="832.2" y="0" width="20.8" height="1158" fill="url(#mid)" style="mix-blend-mode:screen;mix-blend-mode:plus-lighter"/><rect x="828.8" y="0" width="3.5" height="1158" fill="url(#l1)" style="mix-blend-mode:screen;mix-blend-mode:plus-lighter"/><rect x="853.0" y="0" width="3.5" height="1158" fill="url(#l2)" style="mix-blend-mode:screen;mix-blend-mode:plus-lighter"/><rect x="1151.0" y="0" width="28.4" height="1158" fill="url(#mid)" style="mix-blend-mode:screen;mix-blend-mode:plus-lighter"/><rect x="1147.5" y="0" width="3.5" height="1158" fill="url(#l1)" style="mix-blend-mode:screen;mix-blend-mode:plus-lighter"/><rect x="1179.4" y="0" width="3.5" height="1158" fill="url(#l2)" style="mix-blend-mode:screen;mix-blend-mode:plus-lighter"/><rect x="1501.0" y="0" width="29.0" height="1158" fill="url(#mid)" style="mix-blend-mode:screen;mix-blend-mode:plus-lighter"/><rect x="1497.5" y="0" width="3.5" height="1158" fill="url(#l1)" style="mix-blend-mode:screen;mix-blend-mode:plus-lighter"/><rect x="1530.0" y="0" width="3.5" height="1158" fill="url(#l2)" style="mix-blend-mode:screen;mix-blend-mode:plus-lighter"/><rect x="1746.5" y="0" width="23.5" height="1158" fill="url(#mid)" style="mix-blend-mode:screen;mix-blend-mode:plus-lighter"/><rect x="1743.0" y="0" width="3.5" height="1158" fill="url(#l1)" style="mix-blend-mode:screen;mix-blend-mode:plus-lighter"/><rect x="1770.0" y="0" width="3.5" height="1158" fill="url(#l2)" style="mix-blend-mode:screen;mix-blend-mode:plus-lighter"/></g></svg><div class="a" style="left:9px;top:413px;width:2px;height:1158px;background:#d9bcbc"></div><div class="a" style="left:1800px;top:413px;width:9px;height:1159px;background:#000"></div><div class="a" style="left:8px;top:413px;width:1px;height:1159px;background:#000"></div><div class="a" style="left:8px;top:1571px;width:1801px;height:1px;background:#000"></div><div class="a" style="left:10px;top:413px;width:1790px;height:1px;background:#08060c"></div><div class="a" style="left:1910px;top:108px;width:2px;height:1464px;background:#0d0d0d"></div><div class="a" style="left:1809px;top:413px;width:103px;height:1159px;background:#232323;border-right:2px solid #141414;border-bottom:1px solid #0a0a0a"></div><div class="db" style="top:418px">Hz</div><div class="hz" style="top:452.7px;color:#5c5c5c">20k</div><div class="a" style="left:1810px;top:459px;width:2px;height:2px;background:#9a9a9a"></div><div class="hz" style="top:480.9px;color:#5c5c5c">18k</div><div class="a" style="left:1810px;top:487px;width:2px;height:2px;background:#9a9a9a"></div><div class="hz" style="top:514.1px;color:#5c5c5c">16k</div><div class="a" style="left:1810px;top:521px;width:2px;height:2px;background:#9a9a9a"></div><div class="hz" style="top:550.9px;color:#5c5c5c">14k</div><div class="a" style="left:1810px;top:557px;width:2px;height:2px;background:#9a9a9a"></div><div class="hz" style="top:598.2px;color:#5c5c5c">12k</div><div class="a" style="left:1810px;top:605px;width:2px;height:2px;background:#9a9a9a"></div><div class="hz" style="top:657.9px;color:#c4c4c4">10k</div><div class="a" style="left:1810px;top:664.9px;width:5px;height:1.5px;background:#b0b0b0"></div><div class="hz" style="top:674.3px;color:#5c5c5c">9.5k</div><div class="a" style="left:1810px;top:681px;width:2px;height:2px;background:#9a9a9a"></div><div class="hz" style="top:693.7px;color:#5c5c5c">9k</div><div class="a" style="left:1810px;top:700px;width:2px;height:2px;background:#9a9a9a"></div><div class="hz" style="top:714.6px;color:#5c5c5c">8.5k</div><div class="a" style="left:1810px;top:721px;width:2px;height:2px;background:#9a9a9a"></div><div class="hz" style="top:736.9px;color:#5c5c5c">8k</div><div class="a" style="left:1810px;top:743px;width:2px;height:2px;background:#9a9a9a"></div><div class="hz" style="top:760.6px;color:#5c5c5c">7.5k</div><div class="a" style="left:1810px;top:767px;width:2px;height:2px;background:#9a9a9a"></div><div class="hz" style="top:786.8px;color:#5c5c5c">7k</div><div class="a" style="left:1810px;top:793px;width:2px;height:2px;background:#9a9a9a"></div><div class="hz" style="top:817.2px;color:#5c5c5c">6.5k</div><div class="a" style="left:1810px;top:824px;width:2px;height:2px;background:#9a9a9a"></div><div class="hz" style="top:849.4px;color:#5c5c5c">6k</div><div class="a" style="left:1810px;top:856px;width:2px;height:2px;background:#9a9a9a"></div><div class="hz" style="top:884.9px;color:#5c5c5c">5.5k</div><div class="a" style="left:1810px;top:891px;width:2px;height:2px;background:#9a9a9a"></div><div class="hz" style="top:926.4px;color:#5c5c5c">5k</div><div class="a" style="left:1810px;top:933px;width:2px;height:2px;background:#9a9a9a"></div><div class="hz" style="top:970.8px;color:#5c5c5c">4.5k</div><div class="a" style="left:1810px;top:977px;width:2px;height:2px;background:#9a9a9a"></div><div class="hz" style="top:1020.5px;color:#5c5c5c">4k</div><div class="a" style="left:1810px;top:1027px;width:2px;height:2px;background:#9a9a9a"></div><div class="hz" style="top:1076.4px;color:#5c5c5c">3.5k</div><div class="a" style="left:1810px;top:1083px;width:2px;height:2px;background:#9a9a9a"></div><div class="hz" style="top:1136.0px;color:#5c5c5c">3k</div><div class="a" style="left:1810px;top:1142px;width:2px;height:2px;background:#9a9a9a"></div><div class="hz" style="top:1200.7px;color:#5c5c5c">2.5k</div><div class="a" style="left:1810px;top:1207px;width:2px;height:2px;background:#9a9a9a"></div><div class="hz" style="top:1269.8px;color:#5c5c5c">2k</div><div class="a" style="left:1810px;top:1276px;width:2px;height:2px;background:#9a9a9a"></div><div class="hz" style="top:1342.2px;color:#5c5c5c">1.5k</div><div class="a" style="left:1810px;top:1349px;width:2px;height:2px;background:#9a9a9a"></div><div class="hz" style="top:1417.2px;color:#c4c4c4">1k</div><div class="a" style="left:1810px;top:1424.2px;width:5px;height:1.5px;background:#b0b0b0"></div><div class="hz" style="top:1447.4px;color:#5c5c5c">800</div><div class="a" style="left:1810px;top:1454px;width:2px;height:2px;background:#9a9a9a"></div><div class="hz" style="top:1478.0px;color:#5c5c5c">600</div><div class="a" style="left:1810px;top:1484px;width:2px;height:2px;background:#9a9a9a"></div><div class="hz" style="top:1508.6px;color:#5c5c5c">400</div><div class="a" style="left:1810px;top:1515px;width:2px;height:2px;background:#9a9a9a"></div><div class="hz" style="top:1556.0px;color:#c4c4c4">100</div><div class="a" style="left:1810px;top:1563.0px;width:5px;height:1.5px;background:#b0b0b0"></div><div class="a" style="left:1810px;top:434.5px;width:2px;height:2px;background:#a0a0a0"></div><div class="a" style="left:1810px;top:1546.7px;width:2px;height:2px;background:#a0a0a0"></div><div class="a" style="left:14px;top:1587px;font-size:22px;line-height:26px;color:#4f92e8">0:00.000</div><div class="a" style="left:644px;top:1591px;width:12px;height:12px;background:#4a4a4a"></div><svg class="a" style="left:683px;top:1589px" width="16" height="16"><path d="M1 1 L14.5 7.5 L1 14 Z" fill="#bdbdbd"/></svg><div class="a" style="left:726px;top:1590px;width:4px;height:14px;background:#4a4a4a"></div><div class="a" style="left:734px;top:1590px;width:4px;height:14px;background:#4a4a4a"></div><svg class="a" style="left:763px;top:1589px" width="20" height="16"><rect x="1" y="1" width="3" height="14" fill="#bdbdbd"/><path d="M17 1.5 V14.5 L5 8 Z" fill="#bdbdbd"/></svg><svg class="a" style="left:802px;top:1590px" width="24" height="14"><path d="M1 7 L11.5 1.5 V12.5 Z M11 7 L22 1.5 V12.5 Z" fill="#bdbdbd"/></svg><svg class="a" style="left:841px;top:1590px" width="24" height="14"><path d="M23 7 L12.5 1.5 V12.5 Z M13 7 L2 1.5 V12.5 Z" fill="#bdbdbd"/></svg><svg class="a" style="left:886px;top:1589px" width="20" height="16"><path d="M1.5 1.5 V14.5 L13 8 Z" fill="#bdbdbd"/><rect x="15" y="1" width="3" height="14" fill="#bdbdbd"/></svg><div class="a" style="left:927.5px;top:1590px;width:14.5px;height:14.5px;border-radius:50%;background:#e83b3b"></div><svg class="a" style="left:964px;top:1587px" width="24" height="20"><path d="M3 9 V17 H21 V11" fill="none" stroke="#bdbdbd" stroke-width="3"/><path d="M7 14 C8 8 12 6 15 6 V2.5 L21 7 L15 11.5 V9 C12 9 9 10 7 14 Z" fill="#bdbdbd"/></svg><svg class="a" style="left:1003px;top:1588px" width="28" height="18"><path d="M6 1 V5 L2 9 L6 13 V17 M10 1 V5 L14 9 L10 13 V17" fill="none" stroke="#bdbdbd" stroke-width="2"/><path d="M13 8 H20 V4.5 L25.5 9 L20 13.5 V10 H13 Z" fill="#bdbdbd"/></svg><svg class="a" style="left:1500px;top:1585px" width="34" height="26" viewBox="0 0 34 26"><path d="M5 1 L8.5 5 H6 V21 H8.5 L5 25 L1.5 21 H4 V5 H1.5 Z" fill="#bdbdbd"/><circle cx="16.3" cy="12.8" r="5.6" fill="none" stroke="#bdbdbd" stroke-width="2"/><line x1="20.3" y1="16.8" x2="24.5" y2="21.2" stroke="#bdbdbd" stroke-width="2.4"/><line x1="13.3" y1="12.8" x2="19.3" y2="12.8" stroke="#bdbdbd" stroke-width="1.8"/><line x1="16.3" y1="9.8" x2="16.3" y2="15.8" stroke="#bdbdbd" stroke-width="1.8"/></svg><svg class="a" style="left:1541px;top:1585px" width="34" height="26" viewBox="0 0 34 26"><path d="M5 1 L8.5 5 H6 V21 H8.5 L5 25 L1.5 21 H4 V5 H1.5 Z" fill="#bdbdbd"/><circle cx="16.3" cy="12.8" r="5.6" fill="none" stroke="#bdbdbd" stroke-width="2"/><line x1="20.3" y1="16.8" x2="24.5" y2="21.2" stroke="#bdbdbd" stroke-width="2.4"/><line x1="13.3" y1="12.8" x2="19.3" y2="12.8" stroke="#bdbdbd" stroke-width="1.8"/></svg><svg class="a" style="left:1580px;top:1585px" width="30" height="26" viewBox="0 0 30 26"><path d="M1 4.5 L6 0.5 V3.5 H24 V0.5 L29 4.5 L24 8.5 V5.5 H6 V8.5 Z" fill="#bdbdbd"/><circle cx="14" cy="14.5" r="5.5" fill="none" stroke="#bdbdbd" stroke-width="2"/><line x1="11" y1="14.5" x2="17" y2="14.5" stroke="#bdbdbd" stroke-width="1.8"/><line x1="14" y1="11.5" x2="14" y2="17.5" stroke="#bdbdbd" stroke-width="1.8"/><line x1="18" y1="18.5" x2="23" y2="23.5" stroke="#bdbdbd" stroke-width="2.5"/></svg><svg class="a" style="left:1621px;top:1585px" width="30" height="26" viewBox="0 0 30 26"><path d="M1 4.5 L6 0.5 V3.5 H24 V0.5 L29 4.5 L24 8.5 V5.5 H6 V8.5 Z" fill="#4e4e4e"/><circle cx="14" cy="14.5" r="5.5" fill="none" stroke="#4e4e4e" stroke-width="2"/><line x1="11" y1="14.5" x2="17" y2="14.5" stroke="#4e4e4e" stroke-width="1.8"/><line x1="18" y1="18.5" x2="23" y2="23.5" stroke="#4e4e4e" stroke-width="2.5"/></svg><svg class="a" style="left:1662px;top:1585px" width="28" height="26" viewBox="0 0 28 26"><circle cx="13" cy="13" r="5.5" fill="none" stroke="#4e4e4e" stroke-width="2"/><line x1="10" y1="13" x2="16" y2="13" stroke="#4e4e4e" stroke-width="1.8"/><line x1="17" y1="17" x2="22" y2="22" stroke="#4e4e4e" stroke-width="2.5"/><path d="M13 1 L16 4 H10 Z M13 25 L16 22 H10 Z M1 13 L4 10 V16 Z M25 13 L22 10 V16 Z" fill="#4e4e4e"/></svg><svg class="a" style="left:1702px;top:1585px" width="36" height="26" viewBox="0 0 36 26"><path d="M7 3 V8 L3 13 L7 18 V23" fill="none" stroke="#bdbdbd" stroke-width="2"/><circle cx="20" cy="12" r="6" fill="none" stroke="#bdbdbd" stroke-width="2.2"/><line x1="24.5" y1="16.5" x2="30.0" y2="22" stroke="#bdbdbd" stroke-width="2.5"/></svg><svg class="a" style="left:1746px;top:1585px" width="36" height="26" viewBox="0 0 36 26"><path d="M3 3 V8 L7 13 L3 18 V23" fill="none" stroke="#bdbdbd" stroke-width="2"/><circle cx="18" cy="12" r="6" fill="none" stroke="#bdbdbd" stroke-width="2.2"/><line x1="22.5" y1="16.5" x2="28.0" y2="22" stroke="#bdbdbd" stroke-width="2.5"/></svg><svg class="a" style="left:1782px;top:1585px" width="36" height="26" viewBox="0 0 36 26"><path d="M7 3 V8 L3 13 L7 18 V23" fill="none" stroke="#bdbdbd" stroke-width="2"/><path d="M10 3 V8 L14 13 L10 18 V23" fill="none" stroke="#bdbdbd" stroke-width="2"/><circle cx="23" cy="12" r="6" fill="none" stroke="#bdbdbd" stroke-width="2.2"/><line x1="27.5" y1="16.5" x2="33.0" y2="22" stroke="#bdbdbd" stroke-width="2.5"/></svg><svg class="a" style="left:1826px;top:1586px" width="24" height="24" viewBox="0 0 24 24"><circle cx="12" cy="14" r="8" fill="none" stroke="#bdbdbd" stroke-width="2.2"/><rect x="9" y="1" width="6" height="2" fill="#bdbdbd"/><rect x="11" y="2" width="2" height="4" fill="#bdbdbd"/><path d="M12 14 V7 A7 7 0 0 1 17.5 10 Z" fill="#bdbdbd"/><path d="M3 5 L6 3 L7.5 5 L4.5 7.5 Z" fill="#bdbdbd"/></svg><svg class="a" style="left:1864px;top:1585px" width="34" height="26" viewBox="0 0 34 26"><path d="M5 1 L8.5 5 H6 V21 H8.5 L5 25 L1.5 21 H4 V5 H1.5 Z" fill="#474747"/><circle cx="16.3" cy="12.8" r="5.6" fill="none" stroke="#474747" stroke-width="2"/><line x1="20.3" y1="16.8" x2="24.5" y2="21.2" stroke="#474747" stroke-width="2.4"/><line x1="13.3" y1="12.8" x2="19.3" y2="12.8" stroke="#474747" stroke-width="1.8"/><line x1="16.3" y1="9.8" x2="16.3" y2="15.8" stroke="#474747" stroke-width="1.8"/></svg></div></body></html>
